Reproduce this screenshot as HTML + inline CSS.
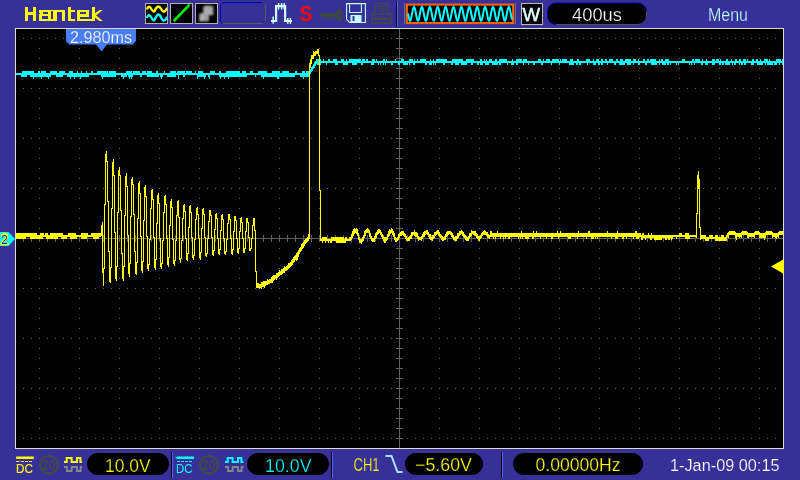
<!DOCTYPE html>
<html><head><meta charset="utf-8">
<style>
html,body{margin:0;padding:0;width:800px;height:480px;overflow:hidden;background:#363098;}
svg{display:block;will-change:transform;}
text{font-family:"Liberation Sans",sans-serif;}
</style></head><body>
<svg width="800" height="480" viewBox="0 0 800 480">
<defs>
<filter id="blur1" x="-20%" y="-20%" width="140%" height="140%"><feGaussianBlur stdDeviation="0.8"/></filter>
</defs>
<rect x="0" y="0" width="800" height="480" fill="#363098"/>
<!-- screen -->
<rect x="15" y="28" width="769" height="421" fill="#dcdcd0"/>
<rect x="16" y="29" width="767" height="419" fill="#000"/>
<path d="M23 38h1v1h-1zM31 38h1v1h-1zM39 38h1v1h-1zM47 38h1v1h-1zM55 38h1v1h-1zM63 38h1v1h-1zM71 38h1v1h-1zM79 38h1v1h-1zM87 38h1v1h-1zM95 38h1v1h-1zM103 38h1v1h-1zM111 38h1v1h-1zM119 38h1v1h-1zM127 38h1v1h-1zM135 38h1v1h-1zM143 38h1v1h-1zM151 38h1v1h-1zM159 38h1v1h-1zM167 38h1v1h-1zM175 38h1v1h-1zM183 38h1v1h-1zM191 38h1v1h-1zM199 38h1v1h-1zM207 38h1v1h-1zM215 38h1v1h-1zM223 38h1v1h-1zM231 38h1v1h-1zM239 38h1v1h-1zM247 38h1v1h-1zM255 38h1v1h-1zM263 38h1v1h-1zM271 38h1v1h-1zM279 38h1v1h-1zM287 38h1v1h-1zM295 38h1v1h-1zM303 38h1v1h-1zM311 38h1v1h-1zM319 38h1v1h-1zM327 38h1v1h-1zM335 38h1v1h-1zM343 38h1v1h-1zM351 38h1v1h-1zM359 38h1v1h-1zM367 38h1v1h-1zM375 38h1v1h-1zM383 38h1v1h-1zM391 38h1v1h-1zM399 38h1v1h-1zM407 38h1v1h-1zM415 38h1v1h-1zM423 38h1v1h-1zM431 38h1v1h-1zM439 38h1v1h-1zM447 38h1v1h-1zM455 38h1v1h-1zM463 38h1v1h-1zM471 38h1v1h-1zM479 38h1v1h-1zM487 38h1v1h-1zM495 38h1v1h-1zM503 38h1v1h-1zM511 38h1v1h-1zM519 38h1v1h-1zM527 38h1v1h-1zM535 38h1v1h-1zM543 38h1v1h-1zM551 38h1v1h-1zM559 38h1v1h-1zM567 38h1v1h-1zM575 38h1v1h-1zM583 38h1v1h-1zM591 38h1v1h-1zM599 38h1v1h-1zM607 38h1v1h-1zM615 38h1v1h-1zM623 38h1v1h-1zM631 38h1v1h-1zM639 38h1v1h-1zM647 38h1v1h-1zM655 38h1v1h-1zM663 38h1v1h-1zM671 38h1v1h-1zM679 38h1v1h-1zM687 38h1v1h-1zM695 38h1v1h-1zM703 38h1v1h-1zM711 38h1v1h-1zM719 38h1v1h-1zM727 38h1v1h-1zM735 38h1v1h-1zM743 38h1v1h-1zM751 38h1v1h-1zM759 38h1v1h-1zM767 38h1v1h-1zM775 38h1v1h-1zM23 88h1v1h-1zM31 88h1v1h-1zM39 88h1v1h-1zM47 88h1v1h-1zM55 88h1v1h-1zM63 88h1v1h-1zM71 88h1v1h-1zM79 88h1v1h-1zM87 88h1v1h-1zM95 88h1v1h-1zM103 88h1v1h-1zM111 88h1v1h-1zM119 88h1v1h-1zM127 88h1v1h-1zM135 88h1v1h-1zM143 88h1v1h-1zM151 88h1v1h-1zM159 88h1v1h-1zM167 88h1v1h-1zM175 88h1v1h-1zM183 88h1v1h-1zM191 88h1v1h-1zM199 88h1v1h-1zM207 88h1v1h-1zM215 88h1v1h-1zM223 88h1v1h-1zM231 88h1v1h-1zM239 88h1v1h-1zM247 88h1v1h-1zM255 88h1v1h-1zM263 88h1v1h-1zM271 88h1v1h-1zM279 88h1v1h-1zM287 88h1v1h-1zM295 88h1v1h-1zM303 88h1v1h-1zM311 88h1v1h-1zM319 88h1v1h-1zM327 88h1v1h-1zM335 88h1v1h-1zM343 88h1v1h-1zM351 88h1v1h-1zM359 88h1v1h-1zM367 88h1v1h-1zM375 88h1v1h-1zM383 88h1v1h-1zM391 88h1v1h-1zM399 88h1v1h-1zM407 88h1v1h-1zM415 88h1v1h-1zM423 88h1v1h-1zM431 88h1v1h-1zM439 88h1v1h-1zM447 88h1v1h-1zM455 88h1v1h-1zM463 88h1v1h-1zM471 88h1v1h-1zM479 88h1v1h-1zM487 88h1v1h-1zM495 88h1v1h-1zM503 88h1v1h-1zM511 88h1v1h-1zM519 88h1v1h-1zM527 88h1v1h-1zM535 88h1v1h-1zM543 88h1v1h-1zM551 88h1v1h-1zM559 88h1v1h-1zM567 88h1v1h-1zM575 88h1v1h-1zM583 88h1v1h-1zM591 88h1v1h-1zM599 88h1v1h-1zM607 88h1v1h-1zM615 88h1v1h-1zM623 88h1v1h-1zM631 88h1v1h-1zM639 88h1v1h-1zM647 88h1v1h-1zM655 88h1v1h-1zM663 88h1v1h-1zM671 88h1v1h-1zM679 88h1v1h-1zM687 88h1v1h-1zM695 88h1v1h-1zM703 88h1v1h-1zM711 88h1v1h-1zM719 88h1v1h-1zM727 88h1v1h-1zM735 88h1v1h-1zM743 88h1v1h-1zM751 88h1v1h-1zM759 88h1v1h-1zM767 88h1v1h-1zM775 88h1v1h-1zM23 138h1v1h-1zM31 138h1v1h-1zM39 138h1v1h-1zM47 138h1v1h-1zM55 138h1v1h-1zM63 138h1v1h-1zM71 138h1v1h-1zM79 138h1v1h-1zM87 138h1v1h-1zM95 138h1v1h-1zM103 138h1v1h-1zM111 138h1v1h-1zM119 138h1v1h-1zM127 138h1v1h-1zM135 138h1v1h-1zM143 138h1v1h-1zM151 138h1v1h-1zM159 138h1v1h-1zM167 138h1v1h-1zM175 138h1v1h-1zM183 138h1v1h-1zM191 138h1v1h-1zM199 138h1v1h-1zM207 138h1v1h-1zM215 138h1v1h-1zM223 138h1v1h-1zM231 138h1v1h-1zM239 138h1v1h-1zM247 138h1v1h-1zM255 138h1v1h-1zM263 138h1v1h-1zM271 138h1v1h-1zM279 138h1v1h-1zM287 138h1v1h-1zM295 138h1v1h-1zM303 138h1v1h-1zM311 138h1v1h-1zM319 138h1v1h-1zM327 138h1v1h-1zM335 138h1v1h-1zM343 138h1v1h-1zM351 138h1v1h-1zM359 138h1v1h-1zM367 138h1v1h-1zM375 138h1v1h-1zM383 138h1v1h-1zM391 138h1v1h-1zM399 138h1v1h-1zM407 138h1v1h-1zM415 138h1v1h-1zM423 138h1v1h-1zM431 138h1v1h-1zM439 138h1v1h-1zM447 138h1v1h-1zM455 138h1v1h-1zM463 138h1v1h-1zM471 138h1v1h-1zM479 138h1v1h-1zM487 138h1v1h-1zM495 138h1v1h-1zM503 138h1v1h-1zM511 138h1v1h-1zM519 138h1v1h-1zM527 138h1v1h-1zM535 138h1v1h-1zM543 138h1v1h-1zM551 138h1v1h-1zM559 138h1v1h-1zM567 138h1v1h-1zM575 138h1v1h-1zM583 138h1v1h-1zM591 138h1v1h-1zM599 138h1v1h-1zM607 138h1v1h-1zM615 138h1v1h-1zM623 138h1v1h-1zM631 138h1v1h-1zM639 138h1v1h-1zM647 138h1v1h-1zM655 138h1v1h-1zM663 138h1v1h-1zM671 138h1v1h-1zM679 138h1v1h-1zM687 138h1v1h-1zM695 138h1v1h-1zM703 138h1v1h-1zM711 138h1v1h-1zM719 138h1v1h-1zM727 138h1v1h-1zM735 138h1v1h-1zM743 138h1v1h-1zM751 138h1v1h-1zM759 138h1v1h-1zM767 138h1v1h-1zM775 138h1v1h-1zM23 188h1v1h-1zM31 188h1v1h-1zM39 188h1v1h-1zM47 188h1v1h-1zM55 188h1v1h-1zM63 188h1v1h-1zM71 188h1v1h-1zM79 188h1v1h-1zM87 188h1v1h-1zM95 188h1v1h-1zM103 188h1v1h-1zM111 188h1v1h-1zM119 188h1v1h-1zM127 188h1v1h-1zM135 188h1v1h-1zM143 188h1v1h-1zM151 188h1v1h-1zM159 188h1v1h-1zM167 188h1v1h-1zM175 188h1v1h-1zM183 188h1v1h-1zM191 188h1v1h-1zM199 188h1v1h-1zM207 188h1v1h-1zM215 188h1v1h-1zM223 188h1v1h-1zM231 188h1v1h-1zM239 188h1v1h-1zM247 188h1v1h-1zM255 188h1v1h-1zM263 188h1v1h-1zM271 188h1v1h-1zM279 188h1v1h-1zM287 188h1v1h-1zM295 188h1v1h-1zM303 188h1v1h-1zM311 188h1v1h-1zM319 188h1v1h-1zM327 188h1v1h-1zM335 188h1v1h-1zM343 188h1v1h-1zM351 188h1v1h-1zM359 188h1v1h-1zM367 188h1v1h-1zM375 188h1v1h-1zM383 188h1v1h-1zM391 188h1v1h-1zM399 188h1v1h-1zM407 188h1v1h-1zM415 188h1v1h-1zM423 188h1v1h-1zM431 188h1v1h-1zM439 188h1v1h-1zM447 188h1v1h-1zM455 188h1v1h-1zM463 188h1v1h-1zM471 188h1v1h-1zM479 188h1v1h-1zM487 188h1v1h-1zM495 188h1v1h-1zM503 188h1v1h-1zM511 188h1v1h-1zM519 188h1v1h-1zM527 188h1v1h-1zM535 188h1v1h-1zM543 188h1v1h-1zM551 188h1v1h-1zM559 188h1v1h-1zM567 188h1v1h-1zM575 188h1v1h-1zM583 188h1v1h-1zM591 188h1v1h-1zM599 188h1v1h-1zM607 188h1v1h-1zM615 188h1v1h-1zM623 188h1v1h-1zM631 188h1v1h-1zM639 188h1v1h-1zM647 188h1v1h-1zM655 188h1v1h-1zM663 188h1v1h-1zM671 188h1v1h-1zM679 188h1v1h-1zM687 188h1v1h-1zM695 188h1v1h-1zM703 188h1v1h-1zM711 188h1v1h-1zM719 188h1v1h-1zM727 188h1v1h-1zM735 188h1v1h-1zM743 188h1v1h-1zM751 188h1v1h-1zM759 188h1v1h-1zM767 188h1v1h-1zM775 188h1v1h-1zM23 288h1v1h-1zM31 288h1v1h-1zM39 288h1v1h-1zM47 288h1v1h-1zM55 288h1v1h-1zM63 288h1v1h-1zM71 288h1v1h-1zM79 288h1v1h-1zM87 288h1v1h-1zM95 288h1v1h-1zM103 288h1v1h-1zM111 288h1v1h-1zM119 288h1v1h-1zM127 288h1v1h-1zM135 288h1v1h-1zM143 288h1v1h-1zM151 288h1v1h-1zM159 288h1v1h-1zM167 288h1v1h-1zM175 288h1v1h-1zM183 288h1v1h-1zM191 288h1v1h-1zM199 288h1v1h-1zM207 288h1v1h-1zM215 288h1v1h-1zM223 288h1v1h-1zM231 288h1v1h-1zM239 288h1v1h-1zM247 288h1v1h-1zM255 288h1v1h-1zM263 288h1v1h-1zM271 288h1v1h-1zM279 288h1v1h-1zM287 288h1v1h-1zM295 288h1v1h-1zM303 288h1v1h-1zM311 288h1v1h-1zM319 288h1v1h-1zM327 288h1v1h-1zM335 288h1v1h-1zM343 288h1v1h-1zM351 288h1v1h-1zM359 288h1v1h-1zM367 288h1v1h-1zM375 288h1v1h-1zM383 288h1v1h-1zM391 288h1v1h-1zM399 288h1v1h-1zM407 288h1v1h-1zM415 288h1v1h-1zM423 288h1v1h-1zM431 288h1v1h-1zM439 288h1v1h-1zM447 288h1v1h-1zM455 288h1v1h-1zM463 288h1v1h-1zM471 288h1v1h-1zM479 288h1v1h-1zM487 288h1v1h-1zM495 288h1v1h-1zM503 288h1v1h-1zM511 288h1v1h-1zM519 288h1v1h-1zM527 288h1v1h-1zM535 288h1v1h-1zM543 288h1v1h-1zM551 288h1v1h-1zM559 288h1v1h-1zM567 288h1v1h-1zM575 288h1v1h-1zM583 288h1v1h-1zM591 288h1v1h-1zM599 288h1v1h-1zM607 288h1v1h-1zM615 288h1v1h-1zM623 288h1v1h-1zM631 288h1v1h-1zM639 288h1v1h-1zM647 288h1v1h-1zM655 288h1v1h-1zM663 288h1v1h-1zM671 288h1v1h-1zM679 288h1v1h-1zM687 288h1v1h-1zM695 288h1v1h-1zM703 288h1v1h-1zM711 288h1v1h-1zM719 288h1v1h-1zM727 288h1v1h-1zM735 288h1v1h-1zM743 288h1v1h-1zM751 288h1v1h-1zM759 288h1v1h-1zM767 288h1v1h-1zM775 288h1v1h-1zM23 338h1v1h-1zM31 338h1v1h-1zM39 338h1v1h-1zM47 338h1v1h-1zM55 338h1v1h-1zM63 338h1v1h-1zM71 338h1v1h-1zM79 338h1v1h-1zM87 338h1v1h-1zM95 338h1v1h-1zM103 338h1v1h-1zM111 338h1v1h-1zM119 338h1v1h-1zM127 338h1v1h-1zM135 338h1v1h-1zM143 338h1v1h-1zM151 338h1v1h-1zM159 338h1v1h-1zM167 338h1v1h-1zM175 338h1v1h-1zM183 338h1v1h-1zM191 338h1v1h-1zM199 338h1v1h-1zM207 338h1v1h-1zM215 338h1v1h-1zM223 338h1v1h-1zM231 338h1v1h-1zM239 338h1v1h-1zM247 338h1v1h-1zM255 338h1v1h-1zM263 338h1v1h-1zM271 338h1v1h-1zM279 338h1v1h-1zM287 338h1v1h-1zM295 338h1v1h-1zM303 338h1v1h-1zM311 338h1v1h-1zM319 338h1v1h-1zM327 338h1v1h-1zM335 338h1v1h-1zM343 338h1v1h-1zM351 338h1v1h-1zM359 338h1v1h-1zM367 338h1v1h-1zM375 338h1v1h-1zM383 338h1v1h-1zM391 338h1v1h-1zM399 338h1v1h-1zM407 338h1v1h-1zM415 338h1v1h-1zM423 338h1v1h-1zM431 338h1v1h-1zM439 338h1v1h-1zM447 338h1v1h-1zM455 338h1v1h-1zM463 338h1v1h-1zM471 338h1v1h-1zM479 338h1v1h-1zM487 338h1v1h-1zM495 338h1v1h-1zM503 338h1v1h-1zM511 338h1v1h-1zM519 338h1v1h-1zM527 338h1v1h-1zM535 338h1v1h-1zM543 338h1v1h-1zM551 338h1v1h-1zM559 338h1v1h-1zM567 338h1v1h-1zM575 338h1v1h-1zM583 338h1v1h-1zM591 338h1v1h-1zM599 338h1v1h-1zM607 338h1v1h-1zM615 338h1v1h-1zM623 338h1v1h-1zM631 338h1v1h-1zM639 338h1v1h-1zM647 338h1v1h-1zM655 338h1v1h-1zM663 338h1v1h-1zM671 338h1v1h-1zM679 338h1v1h-1zM687 338h1v1h-1zM695 338h1v1h-1zM703 338h1v1h-1zM711 338h1v1h-1zM719 338h1v1h-1zM727 338h1v1h-1zM735 338h1v1h-1zM743 338h1v1h-1zM751 338h1v1h-1zM759 338h1v1h-1zM767 338h1v1h-1zM775 338h1v1h-1zM23 388h1v1h-1zM31 388h1v1h-1zM39 388h1v1h-1zM47 388h1v1h-1zM55 388h1v1h-1zM63 388h1v1h-1zM71 388h1v1h-1zM79 388h1v1h-1zM87 388h1v1h-1zM95 388h1v1h-1zM103 388h1v1h-1zM111 388h1v1h-1zM119 388h1v1h-1zM127 388h1v1h-1zM135 388h1v1h-1zM143 388h1v1h-1zM151 388h1v1h-1zM159 388h1v1h-1zM167 388h1v1h-1zM175 388h1v1h-1zM183 388h1v1h-1zM191 388h1v1h-1zM199 388h1v1h-1zM207 388h1v1h-1zM215 388h1v1h-1zM223 388h1v1h-1zM231 388h1v1h-1zM239 388h1v1h-1zM247 388h1v1h-1zM255 388h1v1h-1zM263 388h1v1h-1zM271 388h1v1h-1zM279 388h1v1h-1zM287 388h1v1h-1zM295 388h1v1h-1zM303 388h1v1h-1zM311 388h1v1h-1zM319 388h1v1h-1zM327 388h1v1h-1zM335 388h1v1h-1zM343 388h1v1h-1zM351 388h1v1h-1zM359 388h1v1h-1zM367 388h1v1h-1zM375 388h1v1h-1zM383 388h1v1h-1zM391 388h1v1h-1zM399 388h1v1h-1zM407 388h1v1h-1zM415 388h1v1h-1zM423 388h1v1h-1zM431 388h1v1h-1zM439 388h1v1h-1zM447 388h1v1h-1zM455 388h1v1h-1zM463 388h1v1h-1zM471 388h1v1h-1zM479 388h1v1h-1zM487 388h1v1h-1zM495 388h1v1h-1zM503 388h1v1h-1zM511 388h1v1h-1zM519 388h1v1h-1zM527 388h1v1h-1zM535 388h1v1h-1zM543 388h1v1h-1zM551 388h1v1h-1zM559 388h1v1h-1zM567 388h1v1h-1zM575 388h1v1h-1zM583 388h1v1h-1zM591 388h1v1h-1zM599 388h1v1h-1zM607 388h1v1h-1zM615 388h1v1h-1zM623 388h1v1h-1zM631 388h1v1h-1zM639 388h1v1h-1zM647 388h1v1h-1zM655 388h1v1h-1zM663 388h1v1h-1zM671 388h1v1h-1zM679 388h1v1h-1zM687 388h1v1h-1zM695 388h1v1h-1zM703 388h1v1h-1zM711 388h1v1h-1zM719 388h1v1h-1zM727 388h1v1h-1zM735 388h1v1h-1zM743 388h1v1h-1zM751 388h1v1h-1zM759 388h1v1h-1zM767 388h1v1h-1zM775 388h1v1h-1zM23 438h1v1h-1zM31 438h1v1h-1zM39 438h1v1h-1zM47 438h1v1h-1zM55 438h1v1h-1zM63 438h1v1h-1zM71 438h1v1h-1zM79 438h1v1h-1zM87 438h1v1h-1zM95 438h1v1h-1zM103 438h1v1h-1zM111 438h1v1h-1zM119 438h1v1h-1zM127 438h1v1h-1zM135 438h1v1h-1zM143 438h1v1h-1zM151 438h1v1h-1zM159 438h1v1h-1zM167 438h1v1h-1zM175 438h1v1h-1zM183 438h1v1h-1zM191 438h1v1h-1zM199 438h1v1h-1zM207 438h1v1h-1zM215 438h1v1h-1zM223 438h1v1h-1zM231 438h1v1h-1zM239 438h1v1h-1zM247 438h1v1h-1zM255 438h1v1h-1zM263 438h1v1h-1zM271 438h1v1h-1zM279 438h1v1h-1zM287 438h1v1h-1zM295 438h1v1h-1zM303 438h1v1h-1zM311 438h1v1h-1zM319 438h1v1h-1zM327 438h1v1h-1zM335 438h1v1h-1zM343 438h1v1h-1zM351 438h1v1h-1zM359 438h1v1h-1zM367 438h1v1h-1zM375 438h1v1h-1zM383 438h1v1h-1zM391 438h1v1h-1zM399 438h1v1h-1zM407 438h1v1h-1zM415 438h1v1h-1zM423 438h1v1h-1zM431 438h1v1h-1zM439 438h1v1h-1zM447 438h1v1h-1zM455 438h1v1h-1zM463 438h1v1h-1zM471 438h1v1h-1zM479 438h1v1h-1zM487 438h1v1h-1zM495 438h1v1h-1zM503 438h1v1h-1zM511 438h1v1h-1zM519 438h1v1h-1zM527 438h1v1h-1zM535 438h1v1h-1zM543 438h1v1h-1zM551 438h1v1h-1zM559 438h1v1h-1zM567 438h1v1h-1zM575 438h1v1h-1zM583 438h1v1h-1zM591 438h1v1h-1zM599 438h1v1h-1zM607 438h1v1h-1zM615 438h1v1h-1zM623 438h1v1h-1zM631 438h1v1h-1zM639 438h1v1h-1zM647 438h1v1h-1zM655 438h1v1h-1zM663 438h1v1h-1zM671 438h1v1h-1zM679 438h1v1h-1zM687 438h1v1h-1zM695 438h1v1h-1zM703 438h1v1h-1zM711 438h1v1h-1zM719 438h1v1h-1zM727 438h1v1h-1zM735 438h1v1h-1zM743 438h1v1h-1zM751 438h1v1h-1zM759 438h1v1h-1zM767 438h1v1h-1zM775 438h1v1h-1zM39 38h1v1h-1zM39 48h1v1h-1zM39 58h1v1h-1zM39 68h1v1h-1zM39 78h1v1h-1zM39 88h1v1h-1zM39 98h1v1h-1zM39 108h1v1h-1zM39 118h1v1h-1zM39 128h1v1h-1zM39 138h1v1h-1zM39 148h1v1h-1zM39 158h1v1h-1zM39 168h1v1h-1zM39 178h1v1h-1zM39 188h1v1h-1zM39 198h1v1h-1zM39 208h1v1h-1zM39 218h1v1h-1zM39 228h1v1h-1zM39 248h1v1h-1zM39 258h1v1h-1zM39 268h1v1h-1zM39 278h1v1h-1zM39 288h1v1h-1zM39 298h1v1h-1zM39 308h1v1h-1zM39 318h1v1h-1zM39 328h1v1h-1zM39 338h1v1h-1zM39 348h1v1h-1zM39 358h1v1h-1zM39 368h1v1h-1zM39 378h1v1h-1zM39 388h1v1h-1zM39 398h1v1h-1zM39 408h1v1h-1zM39 418h1v1h-1zM39 428h1v1h-1zM39 438h1v1h-1zM79 38h1v1h-1zM79 48h1v1h-1zM79 58h1v1h-1zM79 68h1v1h-1zM79 78h1v1h-1zM79 88h1v1h-1zM79 98h1v1h-1zM79 108h1v1h-1zM79 118h1v1h-1zM79 128h1v1h-1zM79 138h1v1h-1zM79 148h1v1h-1zM79 158h1v1h-1zM79 168h1v1h-1zM79 178h1v1h-1zM79 188h1v1h-1zM79 198h1v1h-1zM79 208h1v1h-1zM79 218h1v1h-1zM79 228h1v1h-1zM79 248h1v1h-1zM79 258h1v1h-1zM79 268h1v1h-1zM79 278h1v1h-1zM79 288h1v1h-1zM79 298h1v1h-1zM79 308h1v1h-1zM79 318h1v1h-1zM79 328h1v1h-1zM79 338h1v1h-1zM79 348h1v1h-1zM79 358h1v1h-1zM79 368h1v1h-1zM79 378h1v1h-1zM79 388h1v1h-1zM79 398h1v1h-1zM79 408h1v1h-1zM79 418h1v1h-1zM79 428h1v1h-1zM79 438h1v1h-1zM119 38h1v1h-1zM119 48h1v1h-1zM119 58h1v1h-1zM119 68h1v1h-1zM119 78h1v1h-1zM119 88h1v1h-1zM119 98h1v1h-1zM119 108h1v1h-1zM119 118h1v1h-1zM119 128h1v1h-1zM119 138h1v1h-1zM119 148h1v1h-1zM119 158h1v1h-1zM119 168h1v1h-1zM119 178h1v1h-1zM119 188h1v1h-1zM119 198h1v1h-1zM119 208h1v1h-1zM119 218h1v1h-1zM119 228h1v1h-1zM119 248h1v1h-1zM119 258h1v1h-1zM119 268h1v1h-1zM119 278h1v1h-1zM119 288h1v1h-1zM119 298h1v1h-1zM119 308h1v1h-1zM119 318h1v1h-1zM119 328h1v1h-1zM119 338h1v1h-1zM119 348h1v1h-1zM119 358h1v1h-1zM119 368h1v1h-1zM119 378h1v1h-1zM119 388h1v1h-1zM119 398h1v1h-1zM119 408h1v1h-1zM119 418h1v1h-1zM119 428h1v1h-1zM119 438h1v1h-1zM159 38h1v1h-1zM159 48h1v1h-1zM159 58h1v1h-1zM159 68h1v1h-1zM159 78h1v1h-1zM159 88h1v1h-1zM159 98h1v1h-1zM159 108h1v1h-1zM159 118h1v1h-1zM159 128h1v1h-1zM159 138h1v1h-1zM159 148h1v1h-1zM159 158h1v1h-1zM159 168h1v1h-1zM159 178h1v1h-1zM159 188h1v1h-1zM159 198h1v1h-1zM159 208h1v1h-1zM159 218h1v1h-1zM159 228h1v1h-1zM159 248h1v1h-1zM159 258h1v1h-1zM159 268h1v1h-1zM159 278h1v1h-1zM159 288h1v1h-1zM159 298h1v1h-1zM159 308h1v1h-1zM159 318h1v1h-1zM159 328h1v1h-1zM159 338h1v1h-1zM159 348h1v1h-1zM159 358h1v1h-1zM159 368h1v1h-1zM159 378h1v1h-1zM159 388h1v1h-1zM159 398h1v1h-1zM159 408h1v1h-1zM159 418h1v1h-1zM159 428h1v1h-1zM159 438h1v1h-1zM199 38h1v1h-1zM199 48h1v1h-1zM199 58h1v1h-1zM199 68h1v1h-1zM199 78h1v1h-1zM199 88h1v1h-1zM199 98h1v1h-1zM199 108h1v1h-1zM199 118h1v1h-1zM199 128h1v1h-1zM199 138h1v1h-1zM199 148h1v1h-1zM199 158h1v1h-1zM199 168h1v1h-1zM199 178h1v1h-1zM199 188h1v1h-1zM199 198h1v1h-1zM199 208h1v1h-1zM199 218h1v1h-1zM199 228h1v1h-1zM199 248h1v1h-1zM199 258h1v1h-1zM199 268h1v1h-1zM199 278h1v1h-1zM199 288h1v1h-1zM199 298h1v1h-1zM199 308h1v1h-1zM199 318h1v1h-1zM199 328h1v1h-1zM199 338h1v1h-1zM199 348h1v1h-1zM199 358h1v1h-1zM199 368h1v1h-1zM199 378h1v1h-1zM199 388h1v1h-1zM199 398h1v1h-1zM199 408h1v1h-1zM199 418h1v1h-1zM199 428h1v1h-1zM199 438h1v1h-1zM239 38h1v1h-1zM239 48h1v1h-1zM239 58h1v1h-1zM239 68h1v1h-1zM239 78h1v1h-1zM239 88h1v1h-1zM239 98h1v1h-1zM239 108h1v1h-1zM239 118h1v1h-1zM239 128h1v1h-1zM239 138h1v1h-1zM239 148h1v1h-1zM239 158h1v1h-1zM239 168h1v1h-1zM239 178h1v1h-1zM239 188h1v1h-1zM239 198h1v1h-1zM239 208h1v1h-1zM239 218h1v1h-1zM239 228h1v1h-1zM239 248h1v1h-1zM239 258h1v1h-1zM239 268h1v1h-1zM239 278h1v1h-1zM239 288h1v1h-1zM239 298h1v1h-1zM239 308h1v1h-1zM239 318h1v1h-1zM239 328h1v1h-1zM239 338h1v1h-1zM239 348h1v1h-1zM239 358h1v1h-1zM239 368h1v1h-1zM239 378h1v1h-1zM239 388h1v1h-1zM239 398h1v1h-1zM239 408h1v1h-1zM239 418h1v1h-1zM239 428h1v1h-1zM239 438h1v1h-1zM279 38h1v1h-1zM279 48h1v1h-1zM279 58h1v1h-1zM279 68h1v1h-1zM279 78h1v1h-1zM279 88h1v1h-1zM279 98h1v1h-1zM279 108h1v1h-1zM279 118h1v1h-1zM279 128h1v1h-1zM279 138h1v1h-1zM279 148h1v1h-1zM279 158h1v1h-1zM279 168h1v1h-1zM279 178h1v1h-1zM279 188h1v1h-1zM279 198h1v1h-1zM279 208h1v1h-1zM279 218h1v1h-1zM279 228h1v1h-1zM279 248h1v1h-1zM279 258h1v1h-1zM279 268h1v1h-1zM279 278h1v1h-1zM279 288h1v1h-1zM279 298h1v1h-1zM279 308h1v1h-1zM279 318h1v1h-1zM279 328h1v1h-1zM279 338h1v1h-1zM279 348h1v1h-1zM279 358h1v1h-1zM279 368h1v1h-1zM279 378h1v1h-1zM279 388h1v1h-1zM279 398h1v1h-1zM279 408h1v1h-1zM279 418h1v1h-1zM279 428h1v1h-1zM279 438h1v1h-1zM319 38h1v1h-1zM319 48h1v1h-1zM319 58h1v1h-1zM319 68h1v1h-1zM319 78h1v1h-1zM319 88h1v1h-1zM319 98h1v1h-1zM319 108h1v1h-1zM319 118h1v1h-1zM319 128h1v1h-1zM319 138h1v1h-1zM319 148h1v1h-1zM319 158h1v1h-1zM319 168h1v1h-1zM319 178h1v1h-1zM319 188h1v1h-1zM319 198h1v1h-1zM319 208h1v1h-1zM319 218h1v1h-1zM319 228h1v1h-1zM319 248h1v1h-1zM319 258h1v1h-1zM319 268h1v1h-1zM319 278h1v1h-1zM319 288h1v1h-1zM319 298h1v1h-1zM319 308h1v1h-1zM319 318h1v1h-1zM319 328h1v1h-1zM319 338h1v1h-1zM319 348h1v1h-1zM319 358h1v1h-1zM319 368h1v1h-1zM319 378h1v1h-1zM319 388h1v1h-1zM319 398h1v1h-1zM319 408h1v1h-1zM319 418h1v1h-1zM319 428h1v1h-1zM319 438h1v1h-1zM359 38h1v1h-1zM359 48h1v1h-1zM359 58h1v1h-1zM359 68h1v1h-1zM359 78h1v1h-1zM359 88h1v1h-1zM359 98h1v1h-1zM359 108h1v1h-1zM359 118h1v1h-1zM359 128h1v1h-1zM359 138h1v1h-1zM359 148h1v1h-1zM359 158h1v1h-1zM359 168h1v1h-1zM359 178h1v1h-1zM359 188h1v1h-1zM359 198h1v1h-1zM359 208h1v1h-1zM359 218h1v1h-1zM359 228h1v1h-1zM359 248h1v1h-1zM359 258h1v1h-1zM359 268h1v1h-1zM359 278h1v1h-1zM359 288h1v1h-1zM359 298h1v1h-1zM359 308h1v1h-1zM359 318h1v1h-1zM359 328h1v1h-1zM359 338h1v1h-1zM359 348h1v1h-1zM359 358h1v1h-1zM359 368h1v1h-1zM359 378h1v1h-1zM359 388h1v1h-1zM359 398h1v1h-1zM359 408h1v1h-1zM359 418h1v1h-1zM359 428h1v1h-1zM359 438h1v1h-1zM439 38h1v1h-1zM439 48h1v1h-1zM439 58h1v1h-1zM439 68h1v1h-1zM439 78h1v1h-1zM439 88h1v1h-1zM439 98h1v1h-1zM439 108h1v1h-1zM439 118h1v1h-1zM439 128h1v1h-1zM439 138h1v1h-1zM439 148h1v1h-1zM439 158h1v1h-1zM439 168h1v1h-1zM439 178h1v1h-1zM439 188h1v1h-1zM439 198h1v1h-1zM439 208h1v1h-1zM439 218h1v1h-1zM439 228h1v1h-1zM439 248h1v1h-1zM439 258h1v1h-1zM439 268h1v1h-1zM439 278h1v1h-1zM439 288h1v1h-1zM439 298h1v1h-1zM439 308h1v1h-1zM439 318h1v1h-1zM439 328h1v1h-1zM439 338h1v1h-1zM439 348h1v1h-1zM439 358h1v1h-1zM439 368h1v1h-1zM439 378h1v1h-1zM439 388h1v1h-1zM439 398h1v1h-1zM439 408h1v1h-1zM439 418h1v1h-1zM439 428h1v1h-1zM439 438h1v1h-1zM479 38h1v1h-1zM479 48h1v1h-1zM479 58h1v1h-1zM479 68h1v1h-1zM479 78h1v1h-1zM479 88h1v1h-1zM479 98h1v1h-1zM479 108h1v1h-1zM479 118h1v1h-1zM479 128h1v1h-1zM479 138h1v1h-1zM479 148h1v1h-1zM479 158h1v1h-1zM479 168h1v1h-1zM479 178h1v1h-1zM479 188h1v1h-1zM479 198h1v1h-1zM479 208h1v1h-1zM479 218h1v1h-1zM479 228h1v1h-1zM479 248h1v1h-1zM479 258h1v1h-1zM479 268h1v1h-1zM479 278h1v1h-1zM479 288h1v1h-1zM479 298h1v1h-1zM479 308h1v1h-1zM479 318h1v1h-1zM479 328h1v1h-1zM479 338h1v1h-1zM479 348h1v1h-1zM479 358h1v1h-1zM479 368h1v1h-1zM479 378h1v1h-1zM479 388h1v1h-1zM479 398h1v1h-1zM479 408h1v1h-1zM479 418h1v1h-1zM479 428h1v1h-1zM479 438h1v1h-1zM519 38h1v1h-1zM519 48h1v1h-1zM519 58h1v1h-1zM519 68h1v1h-1zM519 78h1v1h-1zM519 88h1v1h-1zM519 98h1v1h-1zM519 108h1v1h-1zM519 118h1v1h-1zM519 128h1v1h-1zM519 138h1v1h-1zM519 148h1v1h-1zM519 158h1v1h-1zM519 168h1v1h-1zM519 178h1v1h-1zM519 188h1v1h-1zM519 198h1v1h-1zM519 208h1v1h-1zM519 218h1v1h-1zM519 228h1v1h-1zM519 248h1v1h-1zM519 258h1v1h-1zM519 268h1v1h-1zM519 278h1v1h-1zM519 288h1v1h-1zM519 298h1v1h-1zM519 308h1v1h-1zM519 318h1v1h-1zM519 328h1v1h-1zM519 338h1v1h-1zM519 348h1v1h-1zM519 358h1v1h-1zM519 368h1v1h-1zM519 378h1v1h-1zM519 388h1v1h-1zM519 398h1v1h-1zM519 408h1v1h-1zM519 418h1v1h-1zM519 428h1v1h-1zM519 438h1v1h-1zM559 38h1v1h-1zM559 48h1v1h-1zM559 58h1v1h-1zM559 68h1v1h-1zM559 78h1v1h-1zM559 88h1v1h-1zM559 98h1v1h-1zM559 108h1v1h-1zM559 118h1v1h-1zM559 128h1v1h-1zM559 138h1v1h-1zM559 148h1v1h-1zM559 158h1v1h-1zM559 168h1v1h-1zM559 178h1v1h-1zM559 188h1v1h-1zM559 198h1v1h-1zM559 208h1v1h-1zM559 218h1v1h-1zM559 228h1v1h-1zM559 248h1v1h-1zM559 258h1v1h-1zM559 268h1v1h-1zM559 278h1v1h-1zM559 288h1v1h-1zM559 298h1v1h-1zM559 308h1v1h-1zM559 318h1v1h-1zM559 328h1v1h-1zM559 338h1v1h-1zM559 348h1v1h-1zM559 358h1v1h-1zM559 368h1v1h-1zM559 378h1v1h-1zM559 388h1v1h-1zM559 398h1v1h-1zM559 408h1v1h-1zM559 418h1v1h-1zM559 428h1v1h-1zM559 438h1v1h-1zM599 38h1v1h-1zM599 48h1v1h-1zM599 58h1v1h-1zM599 68h1v1h-1zM599 78h1v1h-1zM599 88h1v1h-1zM599 98h1v1h-1zM599 108h1v1h-1zM599 118h1v1h-1zM599 128h1v1h-1zM599 138h1v1h-1zM599 148h1v1h-1zM599 158h1v1h-1zM599 168h1v1h-1zM599 178h1v1h-1zM599 188h1v1h-1zM599 198h1v1h-1zM599 208h1v1h-1zM599 218h1v1h-1zM599 228h1v1h-1zM599 248h1v1h-1zM599 258h1v1h-1zM599 268h1v1h-1zM599 278h1v1h-1zM599 288h1v1h-1zM599 298h1v1h-1zM599 308h1v1h-1zM599 318h1v1h-1zM599 328h1v1h-1zM599 338h1v1h-1zM599 348h1v1h-1zM599 358h1v1h-1zM599 368h1v1h-1zM599 378h1v1h-1zM599 388h1v1h-1zM599 398h1v1h-1zM599 408h1v1h-1zM599 418h1v1h-1zM599 428h1v1h-1zM599 438h1v1h-1zM639 38h1v1h-1zM639 48h1v1h-1zM639 58h1v1h-1zM639 68h1v1h-1zM639 78h1v1h-1zM639 88h1v1h-1zM639 98h1v1h-1zM639 108h1v1h-1zM639 118h1v1h-1zM639 128h1v1h-1zM639 138h1v1h-1zM639 148h1v1h-1zM639 158h1v1h-1zM639 168h1v1h-1zM639 178h1v1h-1zM639 188h1v1h-1zM639 198h1v1h-1zM639 208h1v1h-1zM639 218h1v1h-1zM639 228h1v1h-1zM639 248h1v1h-1zM639 258h1v1h-1zM639 268h1v1h-1zM639 278h1v1h-1zM639 288h1v1h-1zM639 298h1v1h-1zM639 308h1v1h-1zM639 318h1v1h-1zM639 328h1v1h-1zM639 338h1v1h-1zM639 348h1v1h-1zM639 358h1v1h-1zM639 368h1v1h-1zM639 378h1v1h-1zM639 388h1v1h-1zM639 398h1v1h-1zM639 408h1v1h-1zM639 418h1v1h-1zM639 428h1v1h-1zM639 438h1v1h-1zM679 38h1v1h-1zM679 48h1v1h-1zM679 58h1v1h-1zM679 68h1v1h-1zM679 78h1v1h-1zM679 88h1v1h-1zM679 98h1v1h-1zM679 108h1v1h-1zM679 118h1v1h-1zM679 128h1v1h-1zM679 138h1v1h-1zM679 148h1v1h-1zM679 158h1v1h-1zM679 168h1v1h-1zM679 178h1v1h-1zM679 188h1v1h-1zM679 198h1v1h-1zM679 208h1v1h-1zM679 218h1v1h-1zM679 228h1v1h-1zM679 248h1v1h-1zM679 258h1v1h-1zM679 268h1v1h-1zM679 278h1v1h-1zM679 288h1v1h-1zM679 298h1v1h-1zM679 308h1v1h-1zM679 318h1v1h-1zM679 328h1v1h-1zM679 338h1v1h-1zM679 348h1v1h-1zM679 358h1v1h-1zM679 368h1v1h-1zM679 378h1v1h-1zM679 388h1v1h-1zM679 398h1v1h-1zM679 408h1v1h-1zM679 418h1v1h-1zM679 428h1v1h-1zM679 438h1v1h-1zM719 38h1v1h-1zM719 48h1v1h-1zM719 58h1v1h-1zM719 68h1v1h-1zM719 78h1v1h-1zM719 88h1v1h-1zM719 98h1v1h-1zM719 108h1v1h-1zM719 118h1v1h-1zM719 128h1v1h-1zM719 138h1v1h-1zM719 148h1v1h-1zM719 158h1v1h-1zM719 168h1v1h-1zM719 178h1v1h-1zM719 188h1v1h-1zM719 198h1v1h-1zM719 208h1v1h-1zM719 218h1v1h-1zM719 228h1v1h-1zM719 248h1v1h-1zM719 258h1v1h-1zM719 268h1v1h-1zM719 278h1v1h-1zM719 288h1v1h-1zM719 298h1v1h-1zM719 308h1v1h-1zM719 318h1v1h-1zM719 328h1v1h-1zM719 338h1v1h-1zM719 348h1v1h-1zM719 358h1v1h-1zM719 368h1v1h-1zM719 378h1v1h-1zM719 388h1v1h-1zM719 398h1v1h-1zM719 408h1v1h-1zM719 418h1v1h-1zM719 428h1v1h-1zM719 438h1v1h-1zM759 38h1v1h-1zM759 48h1v1h-1zM759 58h1v1h-1zM759 68h1v1h-1zM759 78h1v1h-1zM759 88h1v1h-1zM759 98h1v1h-1zM759 108h1v1h-1zM759 118h1v1h-1zM759 128h1v1h-1zM759 138h1v1h-1zM759 148h1v1h-1zM759 158h1v1h-1zM759 168h1v1h-1zM759 178h1v1h-1zM759 188h1v1h-1zM759 198h1v1h-1zM759 208h1v1h-1zM759 218h1v1h-1zM759 228h1v1h-1zM759 248h1v1h-1zM759 258h1v1h-1zM759 268h1v1h-1zM759 278h1v1h-1zM759 288h1v1h-1zM759 298h1v1h-1zM759 308h1v1h-1zM759 318h1v1h-1zM759 328h1v1h-1zM759 338h1v1h-1zM759 348h1v1h-1zM759 358h1v1h-1zM759 368h1v1h-1zM759 378h1v1h-1zM759 388h1v1h-1zM759 398h1v1h-1zM759 408h1v1h-1zM759 418h1v1h-1zM759 428h1v1h-1zM759 438h1v1h-1zM399 29h1v419h-1zM16 238h767v1h-767zM396 38h7v1h-7zM396 48h7v1h-7zM396 58h7v1h-7zM396 68h7v1h-7zM396 78h7v1h-7zM396 88h7v1h-7zM396 98h7v1h-7zM396 108h7v1h-7zM396 118h7v1h-7zM396 128h7v1h-7zM396 138h7v1h-7zM396 148h7v1h-7zM396 158h7v1h-7zM396 168h7v1h-7zM396 178h7v1h-7zM396 188h7v1h-7zM396 198h7v1h-7zM396 208h7v1h-7zM396 218h7v1h-7zM396 228h7v1h-7zM396 238h7v1h-7zM396 248h7v1h-7zM396 258h7v1h-7zM396 268h7v1h-7zM396 278h7v1h-7zM396 288h7v1h-7zM396 298h7v1h-7zM396 308h7v1h-7zM396 318h7v1h-7zM396 328h7v1h-7zM396 338h7v1h-7zM396 348h7v1h-7zM396 358h7v1h-7zM396 368h7v1h-7zM396 378h7v1h-7zM396 388h7v1h-7zM396 398h7v1h-7zM396 408h7v1h-7zM396 418h7v1h-7zM396 428h7v1h-7zM396 438h7v1h-7zM23 235h1v7h-1zM31 235h1v7h-1zM39 235h1v7h-1zM47 235h1v7h-1zM55 235h1v7h-1zM63 235h1v7h-1zM71 235h1v7h-1zM79 235h1v7h-1zM87 235h1v7h-1zM95 235h1v7h-1zM103 235h1v7h-1zM111 235h1v7h-1zM119 235h1v7h-1zM127 235h1v7h-1zM135 235h1v7h-1zM143 235h1v7h-1zM151 235h1v7h-1zM159 235h1v7h-1zM167 235h1v7h-1zM175 235h1v7h-1zM183 235h1v7h-1zM191 235h1v7h-1zM199 235h1v7h-1zM207 235h1v7h-1zM215 235h1v7h-1zM223 235h1v7h-1zM231 235h1v7h-1zM239 235h1v7h-1zM247 235h1v7h-1zM255 235h1v7h-1zM263 235h1v7h-1zM271 235h1v7h-1zM279 235h1v7h-1zM287 235h1v7h-1zM295 235h1v7h-1zM303 235h1v7h-1zM311 235h1v7h-1zM319 235h1v7h-1zM327 235h1v7h-1zM335 235h1v7h-1zM343 235h1v7h-1zM351 235h1v7h-1zM359 235h1v7h-1zM367 235h1v7h-1zM375 235h1v7h-1zM383 235h1v7h-1zM391 235h1v7h-1zM399 235h1v7h-1zM407 235h1v7h-1zM415 235h1v7h-1zM423 235h1v7h-1zM431 235h1v7h-1zM439 235h1v7h-1zM447 235h1v7h-1zM455 235h1v7h-1zM463 235h1v7h-1zM471 235h1v7h-1zM479 235h1v7h-1zM487 235h1v7h-1zM495 235h1v7h-1zM503 235h1v7h-1zM511 235h1v7h-1zM519 235h1v7h-1zM527 235h1v7h-1zM535 235h1v7h-1zM543 235h1v7h-1zM551 235h1v7h-1zM559 235h1v7h-1zM567 235h1v7h-1zM575 235h1v7h-1zM583 235h1v7h-1zM591 235h1v7h-1zM599 235h1v7h-1zM607 235h1v7h-1zM615 235h1v7h-1zM623 235h1v7h-1zM631 235h1v7h-1zM639 235h1v7h-1zM647 235h1v7h-1zM655 235h1v7h-1zM663 235h1v7h-1zM671 235h1v7h-1zM679 235h1v7h-1zM687 235h1v7h-1zM695 235h1v7h-1zM703 235h1v7h-1zM711 235h1v7h-1zM719 235h1v7h-1zM727 235h1v7h-1zM735 235h1v7h-1zM743 235h1v7h-1zM751 235h1v7h-1zM759 235h1v7h-1zM767 235h1v7h-1zM775 235h1v7h-1z" fill="#5e625e" shape-rendering="crispEdges"/>
<path d="M16 73h1v2h-1zM17 73h1v2h-1zM18 73h1v2h-1zM19 73h1v2h-1zM20 73h1v2h-1zM21 73h1v4h-1zM22 71h1v6h-1zM23 71h1v6h-1zM24 71h1v6h-1zM25 71h1v6h-1zM26 71h1v6h-1zM27 71h1v4h-1zM28 71h1v4h-1zM29 71h1v4h-1zM30 71h1v6h-1zM31 71h1v6h-1zM32 71h1v6h-1zM33 71h1v8h-1zM34 73h1v4h-1zM35 73h1v4h-1zM36 73h1v4h-1zM37 73h1v4h-1zM38 71h1v6h-1zM39 71h1v6h-1zM40 73h1v4h-1zM41 71h1v8h-1zM42 71h1v6h-1zM43 71h1v6h-1zM44 71h1v6h-1zM45 71h1v6h-1zM46 73h1v4h-1zM47 73h1v4h-1zM48 73h1v6h-1zM49 73h1v4h-1zM50 71h1v6h-1zM51 71h1v4h-1zM52 71h1v4h-1zM53 71h1v4h-1zM54 71h1v4h-1zM55 71h1v4h-1zM56 71h1v6h-1zM57 73h1v4h-1zM58 73h1v4h-1zM59 71h1v6h-1zM60 71h1v6h-1zM61 71h1v6h-1zM62 71h1v6h-1zM63 71h1v4h-1zM64 71h1v4h-1zM65 73h1v2h-1zM66 73h1v2h-1zM67 73h1v4h-1zM68 73h1v4h-1zM69 71h1v6h-1zM70 71h1v8h-1zM71 71h1v6h-1zM72 71h1v6h-1zM73 73h1v4h-1zM74 73h1v6h-1zM75 73h1v4h-1zM76 73h1v4h-1zM77 71h1v6h-1zM78 73h1v4h-1zM79 73h1v4h-1zM80 73h1v6h-1zM81 71h1v6h-1zM82 73h1v4h-1zM83 73h1v4h-1zM84 73h1v4h-1zM85 73h1v4h-1zM86 71h1v6h-1zM87 73h1v4h-1zM88 73h1v4h-1zM89 73h1v2h-1zM90 73h1v2h-1zM91 71h1v4h-1zM92 71h1v4h-1zM93 73h1v2h-1zM94 73h1v2h-1zM95 73h1v2h-1zM96 73h1v2h-1zM97 71h1v4h-1zM98 71h1v4h-1zM99 71h1v4h-1zM100 71h1v4h-1zM101 71h1v6h-1zM102 71h1v8h-1zM103 71h1v6h-1zM104 71h1v6h-1zM105 71h1v6h-1zM106 71h1v6h-1zM107 71h1v6h-1zM108 73h1v4h-1zM109 71h1v6h-1zM110 71h1v6h-1zM111 71h1v6h-1zM112 71h1v6h-1zM113 71h1v6h-1zM114 71h1v6h-1zM115 71h1v6h-1zM116 73h1v2h-1zM117 73h1v2h-1zM118 73h1v2h-1zM119 73h1v2h-1zM120 73h1v2h-1zM121 73h1v4h-1zM122 73h1v4h-1zM123 73h1v6h-1zM124 73h1v4h-1zM125 73h1v4h-1zM126 71h1v6h-1zM127 71h1v4h-1zM128 71h1v6h-1zM129 71h1v8h-1zM130 71h1v6h-1zM131 71h1v8h-1zM132 73h1v4h-1zM133 71h1v4h-1zM134 71h1v4h-1zM135 71h1v4h-1zM136 71h1v4h-1zM137 71h1v4h-1zM138 71h1v4h-1zM139 71h1v4h-1zM140 73h1v4h-1zM141 73h1v4h-1zM142 71h1v4h-1zM143 71h1v4h-1zM144 71h1v4h-1zM145 71h1v4h-1zM146 73h1v2h-1zM147 71h1v6h-1zM148 71h1v6h-1zM149 71h1v6h-1zM150 71h1v6h-1zM151 71h1v6h-1zM152 73h1v4h-1zM153 73h1v4h-1zM154 73h1v4h-1zM155 73h1v4h-1zM156 71h1v6h-1zM157 71h1v6h-1zM158 73h1v4h-1zM159 73h1v2h-1zM160 73h1v4h-1zM161 73h1v6h-1zM162 73h1v4h-1zM163 73h1v2h-1zM164 71h1v4h-1zM165 73h1v2h-1zM166 73h1v2h-1zM167 73h1v4h-1zM168 73h1v4h-1zM169 73h1v4h-1zM170 71h1v6h-1zM171 71h1v6h-1zM172 71h1v6h-1zM173 71h1v6h-1zM174 71h1v6h-1zM175 71h1v6h-1zM176 73h1v2h-1zM177 71h1v4h-1zM178 71h1v8h-1zM179 71h1v4h-1zM180 71h1v4h-1zM181 71h1v4h-1zM182 71h1v4h-1zM183 71h1v6h-1zM184 71h1v6h-1zM185 73h1v2h-1zM186 71h1v4h-1zM187 71h1v4h-1zM188 71h1v4h-1zM189 71h1v4h-1zM190 71h1v4h-1zM191 71h1v4h-1zM192 73h1v2h-1zM193 73h1v2h-1zM194 73h1v2h-1zM195 71h1v4h-1zM196 73h1v2h-1zM197 73h1v6h-1zM198 71h1v6h-1zM199 71h1v6h-1zM200 71h1v6h-1zM201 71h1v6h-1zM202 71h1v6h-1zM203 73h1v4h-1zM204 73h1v6h-1zM205 73h1v4h-1zM206 73h1v2h-1zM207 73h1v2h-1zM208 73h1v4h-1zM209 73h1v6h-1zM210 71h1v4h-1zM211 71h1v4h-1zM212 71h1v4h-1zM213 71h1v4h-1zM214 71h1v4h-1zM215 73h1v2h-1zM216 73h1v2h-1zM217 73h1v2h-1zM218 73h1v2h-1zM219 71h1v6h-1zM220 71h1v8h-1zM221 73h1v4h-1zM222 73h1v4h-1zM223 73h1v4h-1zM224 73h1v6h-1zM225 73h1v4h-1zM226 71h1v6h-1zM227 71h1v6h-1zM228 71h1v8h-1zM229 71h1v6h-1zM230 71h1v6h-1zM231 71h1v6h-1zM232 71h1v6h-1zM233 71h1v6h-1zM234 71h1v6h-1zM235 71h1v6h-1zM236 71h1v6h-1zM237 71h1v6h-1zM238 71h1v6h-1zM239 71h1v6h-1zM240 73h1v4h-1zM241 73h1v4h-1zM242 71h1v6h-1zM243 71h1v6h-1zM244 71h1v6h-1zM245 71h1v6h-1zM246 73h1v4h-1zM247 73h1v2h-1zM248 73h1v2h-1zM249 73h1v2h-1zM250 71h1v4h-1zM251 71h1v4h-1zM252 71h1v4h-1zM253 73h1v2h-1zM254 73h1v2h-1zM255 73h1v4h-1zM256 73h1v2h-1zM257 73h1v2h-1zM258 71h1v4h-1zM259 71h1v4h-1zM260 71h1v4h-1zM261 71h1v6h-1zM262 71h1v6h-1zM263 71h1v8h-1zM264 71h1v6h-1zM265 71h1v6h-1zM266 71h1v6h-1zM267 73h1v4h-1zM268 73h1v4h-1zM269 73h1v4h-1zM270 73h1v4h-1zM271 73h1v4h-1zM272 71h1v6h-1zM273 71h1v6h-1zM274 71h1v6h-1zM275 71h1v6h-1zM276 71h1v6h-1zM277 71h1v8h-1zM278 71h1v8h-1zM279 71h1v6h-1zM280 73h1v4h-1zM281 73h1v4h-1zM282 71h1v6h-1zM283 71h1v6h-1zM284 71h1v6h-1zM285 71h1v6h-1zM286 71h1v6h-1zM287 71h1v6h-1zM288 71h1v6h-1zM289 73h1v4h-1zM290 73h1v4h-1zM291 73h1v4h-1zM292 73h1v4h-1zM293 73h1v4h-1zM294 73h1v4h-1zM295 71h1v4h-1zM296 71h1v4h-1zM297 73h1v2h-1zM298 73h1v2h-1zM299 73h1v2h-1zM300 73h1v4h-1zM301 73h1v4h-1zM302 71h1v6h-1zM303 71h1v8h-1zM304 71h1v6h-1zM305 73h1v4h-1zM306 71h1v6h-1zM307 71h1v6h-1zM308 71h1v6h-1zM309 71h1v6h-1zM310 69h1v5h-1zM311 67h1v5h-1zM312 66h1v5h-1zM313 64h1v5h-1zM314 62h1v6h-1zM315 61h1v5h-1zM316 59h1v5h-1zM317 59h1v6h-1zM318 59h1v6h-1zM319 59h1v6h-1zM320 59h1v6h-1zM321 61h1v2h-1zM322 61h1v2h-1zM323 59h1v4h-1zM324 61h1v2h-1zM325 61h1v2h-1zM326 61h1v4h-1zM327 61h1v2h-1zM328 59h1v4h-1zM329 59h1v4h-1zM330 61h1v2h-1zM331 61h1v2h-1zM332 61h1v2h-1zM333 59h1v4h-1zM334 59h1v4h-1zM335 59h1v6h-1zM336 59h1v6h-1zM337 61h1v4h-1zM338 61h1v2h-1zM339 61h1v2h-1zM340 61h1v2h-1zM341 59h1v4h-1zM342 59h1v4h-1zM343 59h1v6h-1zM344 61h1v4h-1zM345 61h1v4h-1zM346 59h1v6h-1zM347 61h1v4h-1zM348 61h1v2h-1zM349 59h1v4h-1zM350 59h1v4h-1zM351 59h1v4h-1zM352 59h1v6h-1zM353 59h1v6h-1zM354 59h1v6h-1zM355 59h1v6h-1zM356 59h1v6h-1zM357 59h1v4h-1zM358 59h1v4h-1zM359 59h1v4h-1zM360 59h1v4h-1zM361 61h1v4h-1zM362 59h1v6h-1zM363 59h1v4h-1zM364 59h1v4h-1zM365 61h1v2h-1zM366 59h1v4h-1zM367 59h1v4h-1zM368 61h1v2h-1zM369 61h1v2h-1zM370 61h1v2h-1zM371 61h1v4h-1zM372 59h1v6h-1zM373 59h1v6h-1zM374 59h1v4h-1zM375 61h1v2h-1zM376 59h1v4h-1zM377 61h1v2h-1zM378 61h1v4h-1zM379 61h1v2h-1zM380 61h1v4h-1zM381 61h1v2h-1zM382 61h1v2h-1zM383 59h1v6h-1zM384 59h1v4h-1zM385 61h1v4h-1zM386 59h1v4h-1zM387 61h1v2h-1zM388 61h1v2h-1zM389 61h1v2h-1zM390 61h1v2h-1zM391 61h1v4h-1zM392 61h1v4h-1zM393 61h1v2h-1zM394 61h1v2h-1zM395 59h1v4h-1zM396 61h1v2h-1zM397 61h1v2h-1zM398 61h1v4h-1zM399 61h1v4h-1zM400 61h1v2h-1zM401 59h1v4h-1zM402 59h1v4h-1zM403 59h1v6h-1zM404 61h1v4h-1zM405 61h1v4h-1zM406 61h1v4h-1zM407 61h1v4h-1zM408 61h1v2h-1zM409 59h1v6h-1zM410 59h1v4h-1zM411 59h1v4h-1zM412 59h1v4h-1zM413 61h1v4h-1zM414 59h1v6h-1zM415 61h1v2h-1zM416 61h1v2h-1zM417 59h1v4h-1zM418 61h1v2h-1zM419 61h1v2h-1zM420 59h1v4h-1zM421 59h1v4h-1zM422 59h1v4h-1zM423 59h1v4h-1zM424 59h1v4h-1zM425 59h1v6h-1zM426 61h1v4h-1zM427 61h1v2h-1zM428 61h1v2h-1zM429 61h1v4h-1zM430 59h1v6h-1zM431 61h1v4h-1zM432 61h1v2h-1zM433 59h1v6h-1zM434 61h1v2h-1zM435 61h1v4h-1zM436 59h1v4h-1zM437 59h1v4h-1zM438 59h1v4h-1zM439 59h1v4h-1zM440 59h1v4h-1zM441 59h1v4h-1zM442 59h1v4h-1zM443 59h1v6h-1zM444 59h1v6h-1zM445 59h1v4h-1zM446 59h1v4h-1zM447 61h1v2h-1zM448 61h1v2h-1zM449 61h1v2h-1zM450 61h1v2h-1zM451 61h1v4h-1zM452 59h1v6h-1zM453 59h1v4h-1zM454 59h1v4h-1zM455 59h1v6h-1zM456 59h1v6h-1zM457 59h1v6h-1zM458 59h1v6h-1zM459 59h1v4h-1zM460 59h1v4h-1zM461 59h1v6h-1zM462 59h1v6h-1zM463 61h1v4h-1zM464 61h1v4h-1zM465 61h1v4h-1zM466 59h1v6h-1zM467 59h1v4h-1zM468 59h1v4h-1zM469 59h1v4h-1zM470 59h1v4h-1zM471 59h1v6h-1zM472 59h1v6h-1zM473 59h1v4h-1zM474 61h1v2h-1zM475 61h1v2h-1zM476 61h1v2h-1zM477 61h1v4h-1zM478 61h1v4h-1zM479 61h1v2h-1zM480 59h1v6h-1zM481 59h1v6h-1zM482 61h1v4h-1zM483 61h1v2h-1zM484 59h1v4h-1zM485 61h1v4h-1zM486 59h1v6h-1zM487 61h1v4h-1zM488 61h1v4h-1zM489 59h1v4h-1zM490 59h1v4h-1zM491 59h1v4h-1zM492 61h1v4h-1zM493 61h1v4h-1zM494 61h1v4h-1zM495 59h1v6h-1zM496 59h1v6h-1zM497 61h1v4h-1zM498 61h1v2h-1zM499 59h1v6h-1zM500 59h1v6h-1zM501 59h1v4h-1zM502 59h1v4h-1zM503 59h1v4h-1zM504 59h1v4h-1zM505 59h1v4h-1zM506 59h1v4h-1zM507 61h1v4h-1zM508 61h1v2h-1zM509 61h1v2h-1zM510 61h1v2h-1zM511 61h1v4h-1zM512 59h1v6h-1zM513 61h1v4h-1zM514 61h1v2h-1zM515 61h1v2h-1zM516 59h1v6h-1zM517 59h1v6h-1zM518 59h1v4h-1zM519 59h1v4h-1zM520 59h1v4h-1zM521 59h1v4h-1zM522 61h1v2h-1zM523 59h1v6h-1zM524 59h1v4h-1zM525 59h1v4h-1zM526 59h1v4h-1zM527 61h1v2h-1zM528 61h1v4h-1zM529 61h1v2h-1zM530 61h1v2h-1zM531 61h1v2h-1zM532 61h1v2h-1zM533 61h1v4h-1zM534 61h1v4h-1zM535 61h1v2h-1zM536 61h1v2h-1zM537 61h1v2h-1zM538 59h1v4h-1zM539 59h1v4h-1zM540 59h1v4h-1zM541 61h1v4h-1zM542 61h1v4h-1zM543 59h1v4h-1zM544 61h1v2h-1zM545 61h1v2h-1zM546 59h1v4h-1zM547 59h1v4h-1zM548 59h1v4h-1zM549 59h1v4h-1zM550 61h1v2h-1zM551 61h1v4h-1zM552 59h1v4h-1zM553 59h1v4h-1zM554 59h1v4h-1zM555 59h1v4h-1zM556 59h1v4h-1zM557 59h1v4h-1zM558 59h1v4h-1zM559 61h1v4h-1zM560 59h1v4h-1zM561 61h1v2h-1zM562 59h1v4h-1zM563 59h1v4h-1zM564 59h1v4h-1zM565 59h1v4h-1zM566 59h1v4h-1zM567 61h1v2h-1zM568 61h1v2h-1zM569 61h1v4h-1zM570 59h1v6h-1zM571 59h1v6h-1zM572 59h1v6h-1zM573 61h1v4h-1zM574 61h1v2h-1zM575 61h1v2h-1zM576 61h1v4h-1zM577 59h1v6h-1zM578 59h1v4h-1zM579 61h1v4h-1zM580 61h1v4h-1zM581 61h1v2h-1zM582 61h1v2h-1zM583 61h1v2h-1zM584 61h1v2h-1zM585 61h1v2h-1zM586 59h1v4h-1zM587 59h1v6h-1zM588 59h1v4h-1zM589 59h1v4h-1zM590 61h1v2h-1zM591 61h1v2h-1zM592 61h1v2h-1zM593 59h1v6h-1zM594 61h1v4h-1zM595 61h1v4h-1zM596 59h1v4h-1zM597 59h1v4h-1zM598 59h1v6h-1zM599 61h1v4h-1zM600 61h1v2h-1zM601 59h1v6h-1zM602 59h1v6h-1zM603 61h1v2h-1zM604 61h1v2h-1zM605 59h1v4h-1zM606 59h1v4h-1zM607 61h1v4h-1zM608 61h1v2h-1zM609 59h1v4h-1zM610 59h1v4h-1zM611 59h1v4h-1zM612 59h1v4h-1zM613 61h1v2h-1zM614 61h1v4h-1zM615 61h1v4h-1zM616 59h1v4h-1zM617 59h1v4h-1zM618 61h1v2h-1zM619 61h1v4h-1zM620 59h1v6h-1zM621 59h1v6h-1zM622 59h1v6h-1zM623 61h1v4h-1zM624 61h1v4h-1zM625 59h1v4h-1zM626 59h1v4h-1zM627 59h1v6h-1zM628 59h1v6h-1zM629 59h1v6h-1zM630 59h1v6h-1zM631 61h1v2h-1zM632 61h1v2h-1zM633 59h1v6h-1zM634 59h1v4h-1zM635 59h1v4h-1zM636 61h1v2h-1zM637 61h1v2h-1zM638 59h1v6h-1zM639 61h1v4h-1zM640 61h1v2h-1zM641 61h1v2h-1zM642 61h1v2h-1zM643 59h1v4h-1zM644 59h1v4h-1zM645 61h1v4h-1zM646 61h1v4h-1zM647 59h1v4h-1zM648 59h1v4h-1zM649 61h1v2h-1zM650 59h1v4h-1zM651 59h1v6h-1zM652 59h1v6h-1zM653 59h1v6h-1zM654 59h1v6h-1zM655 59h1v6h-1zM656 61h1v4h-1zM657 61h1v2h-1zM658 61h1v2h-1zM659 59h1v6h-1zM660 61h1v2h-1zM661 59h1v4h-1zM662 59h1v6h-1zM663 61h1v4h-1zM664 61h1v4h-1zM665 59h1v6h-1zM666 59h1v4h-1zM667 59h1v6h-1zM668 59h1v6h-1zM669 61h1v2h-1zM670 61h1v4h-1zM671 61h1v2h-1zM672 61h1v2h-1zM673 61h1v2h-1zM674 61h1v2h-1zM675 61h1v2h-1zM676 61h1v4h-1zM677 61h1v2h-1zM678 61h1v4h-1zM679 61h1v2h-1zM680 61h1v2h-1zM681 61h1v2h-1zM682 59h1v4h-1zM683 59h1v4h-1zM684 59h1v4h-1zM685 61h1v2h-1zM686 61h1v2h-1zM687 61h1v2h-1zM688 61h1v2h-1zM689 61h1v4h-1zM690 61h1v2h-1zM691 61h1v4h-1zM692 59h1v4h-1zM693 59h1v4h-1zM694 61h1v4h-1zM695 59h1v4h-1zM696 59h1v4h-1zM697 59h1v4h-1zM698 59h1v4h-1zM699 59h1v4h-1zM700 61h1v2h-1zM701 61h1v4h-1zM702 59h1v6h-1zM703 61h1v2h-1zM704 61h1v2h-1zM705 61h1v4h-1zM706 59h1v6h-1zM707 61h1v4h-1zM708 61h1v2h-1zM709 61h1v2h-1zM710 61h1v2h-1zM711 61h1v2h-1zM712 59h1v6h-1zM713 59h1v6h-1zM714 59h1v6h-1zM715 61h1v2h-1zM716 59h1v4h-1zM717 59h1v4h-1zM718 59h1v4h-1zM719 61h1v4h-1zM720 59h1v6h-1zM721 61h1v2h-1zM722 61h1v4h-1zM723 61h1v4h-1zM724 61h1v2h-1zM725 61h1v4h-1zM726 59h1v6h-1zM727 59h1v6h-1zM728 61h1v4h-1zM729 61h1v4h-1zM730 61h1v2h-1zM731 59h1v4h-1zM732 61h1v4h-1zM733 61h1v2h-1zM734 61h1v4h-1zM735 59h1v6h-1zM736 59h1v4h-1zM737 61h1v2h-1zM738 61h1v2h-1zM739 59h1v6h-1zM740 59h1v4h-1zM741 61h1v4h-1zM742 61h1v4h-1zM743 59h1v4h-1zM744 59h1v6h-1zM745 59h1v6h-1zM746 61h1v2h-1zM747 59h1v4h-1zM748 61h1v2h-1zM749 61h1v2h-1zM750 61h1v2h-1zM751 61h1v4h-1zM752 59h1v6h-1zM753 59h1v6h-1zM754 61h1v2h-1zM755 61h1v2h-1zM756 59h1v4h-1zM757 59h1v6h-1zM758 61h1v4h-1zM759 61h1v4h-1zM760 59h1v6h-1zM761 61h1v4h-1zM762 61h1v4h-1zM763 61h1v2h-1zM764 59h1v4h-1zM765 59h1v6h-1zM766 59h1v4h-1zM767 59h1v6h-1zM768 61h1v4h-1zM769 59h1v6h-1zM770 61h1v4h-1zM771 61h1v4h-1zM772 61h1v4h-1zM773 61h1v2h-1zM774 61h1v4h-1zM775 61h1v4h-1zM776 59h1v6h-1zM777 59h1v4h-1zM778 59h1v4h-1zM779 59h1v6h-1zM780 59h1v4h-1zM781 61h1v2h-1zM782 59h1v6h-1z" fill="#00ffff" shape-rendering="crispEdges"/>
<path d="M16 233h1v6h-1zM17 233h1v6h-1zM18 233h1v6h-1zM19 233h1v6h-1zM20 233h1v6h-1zM21 233h1v6h-1zM22 233h1v6h-1zM23 233h1v6h-1zM24 233h1v6h-1zM25 233h1v6h-1zM26 233h1v4h-1zM27 233h1v4h-1zM28 233h1v4h-1zM29 233h1v4h-1zM30 233h1v6h-1zM31 233h1v6h-1zM32 233h1v6h-1zM33 233h1v6h-1zM34 233h1v6h-1zM35 233h1v6h-1zM36 233h1v6h-1zM37 235h1v4h-1zM38 235h1v4h-1zM39 235h1v4h-1zM40 233h1v6h-1zM41 233h1v6h-1zM42 233h1v6h-1zM43 233h1v4h-1zM44 235h1v2h-1zM45 233h1v4h-1zM46 233h1v6h-1zM47 233h1v6h-1zM48 235h1v4h-1zM49 235h1v4h-1zM50 233h1v6h-1zM51 233h1v6h-1zM52 233h1v6h-1zM53 233h1v6h-1zM54 233h1v6h-1zM55 233h1v6h-1zM56 233h1v6h-1zM57 233h1v6h-1zM58 233h1v4h-1zM59 233h1v4h-1zM60 233h1v4h-1zM61 233h1v6h-1zM62 233h1v6h-1zM63 235h1v4h-1zM64 235h1v4h-1zM65 235h1v4h-1zM66 235h1v4h-1zM67 235h1v2h-1zM68 233h1v4h-1zM69 233h1v4h-1zM70 233h1v6h-1zM71 233h1v6h-1zM72 233h1v6h-1zM73 233h1v6h-1zM74 233h1v6h-1zM75 233h1v6h-1zM76 235h1v4h-1zM77 235h1v2h-1zM78 235h1v2h-1zM79 235h1v2h-1zM80 235h1v2h-1zM81 233h1v6h-1zM82 233h1v6h-1zM83 233h1v6h-1zM84 233h1v6h-1zM85 233h1v6h-1zM86 233h1v6h-1zM87 233h1v4h-1zM88 235h1v2h-1zM89 235h1v2h-1zM90 235h1v2h-1zM91 233h1v4h-1zM92 233h1v4h-1zM93 233h1v6h-1zM94 233h1v6h-1zM95 233h1v6h-1zM96 233h1v6h-1zM97 233h1v6h-1zM98 233h1v6h-1zM99 233h1v4h-1zM100 233h1v4h-1zM101 225h1v11h-1zM102 222h1v51h-1zM103 268h1v18h-1zM104 204h1v65h-1zM105 154h1v51h-1zM106 151h1v11h-1zM107 161h1v41h-1zM108 201h1v51h-1zM109 251h1v31h-1zM110 267h1v16h-1zM111 208h1v60h-1zM112 162h1v47h-1zM113 159h1v17h-1zM114 175h1v58h-1zM115 232h1v47h-1zM116 266h1v15h-1zM117 212h1v55h-1zM118 170h1v43h-1zM119 167h1v9h-1zM120 175h1v36h-1zM121 210h1v44h-1zM122 253h1v26h-1zM123 266h1v15h-1zM124 215h1v52h-1zM125 176h1v40h-1zM126 173h1v14h-1zM127 186h1v50h-1zM128 235h1v39h-1zM129 263h1v14h-1zM130 216h1v48h-1zM131 179h1v38h-1zM132 177h1v8h-1zM133 184h1v31h-1zM134 214h1v38h-1zM135 251h1v23h-1zM136 262h1v13h-1zM137 218h1v45h-1zM138 183h1v36h-1zM139 181h1v13h-1zM140 193h1v44h-1zM141 236h1v35h-1zM142 261h1v12h-1zM143 220h1v42h-1zM144 187h1v34h-1zM145 185h1v12h-1zM146 196h1v41h-1zM147 236h1v33h-1zM148 264h1v7h-1zM149 239h1v26h-1zM150 208h1v32h-1zM151 190h1v19h-1zM152 189h1v11h-1zM153 199h1v39h-1zM154 237h1v31h-1zM155 259h1v11h-1zM156 223h1v37h-1zM157 195h1v29h-1zM158 193h1v11h-1zM159 203h1v36h-1zM160 238h1v29h-1zM161 263h1v6h-1zM162 240h1v24h-1zM163 212h1v29h-1zM164 196h1v17h-1zM165 195h1v10h-1zM166 204h1v35h-1zM167 238h1v27h-1zM168 257h1v10h-1zM169 225h1v33h-1zM170 201h1v25h-1zM171 199h1v9h-1zM172 207h1v33h-1zM173 239h1v25h-1zM174 260h1v6h-1zM175 240h1v21h-1zM176 215h1v26h-1zM177 201h1v15h-1zM178 200h1v18h-1zM179 217h1v43h-1zM180 258h1v5h-1zM181 240h1v19h-1zM182 218h1v23h-1zM183 205h1v14h-1zM184 204h1v8h-1zM185 211h1v28h-1zM186 238h1v22h-1zM187 253h1v8h-1zM188 227h1v27h-1zM189 206h1v22h-1zM190 205h1v8h-1zM191 212h1v26h-1zM192 237h1v21h-1zM193 255h1v5h-1zM194 239h1v17h-1zM195 219h1v21h-1zM196 208h1v12h-1zM197 207h1v8h-1zM198 214h1v25h-1zM199 238h1v20h-1zM200 252h1v8h-1zM201 228h1v25h-1zM202 209h1v20h-1zM203 208h1v7h-1zM204 214h1v24h-1zM205 237h1v19h-1zM206 253h1v4h-1zM207 238h1v16h-1zM208 221h1v18h-1zM209 210h1v12h-1zM210 210h1v6h-1zM211 215h1v23h-1zM212 237h1v18h-1zM213 250h1v6h-1zM214 229h1v22h-1zM215 214h1v16h-1zM216 213h1v6h-1zM217 218h1v21h-1zM218 238h1v16h-1zM219 249h1v6h-1zM220 230h1v20h-1zM221 215h1v16h-1zM222 214h1v6h-1zM223 219h1v20h-1zM224 238h1v16h-1zM225 251h1v4h-1zM226 239h1v13h-1zM227 223h1v17h-1zM228 214h1v10h-1zM229 214h1v6h-1zM230 219h1v20h-1zM231 238h1v16h-1zM232 249h1v6h-1zM233 231h1v19h-1zM234 216h1v16h-1zM235 216h1v5h-1zM236 220h1v19h-1zM237 238h1v15h-1zM238 248h1v6h-1zM239 231h1v18h-1zM240 218h1v14h-1zM241 217h1v6h-1zM242 222h1v17h-1zM243 238h1v15h-1zM244 248h1v5h-1zM245 231h1v18h-1zM246 218h1v14h-1zM247 218h1v5h-1zM248 222h1v16h-1zM249 237h1v14h-1zM250 248h1v3h-1zM251 238h1v11h-1zM252 225h1v14h-1zM253 218h1v8h-1zM254 218h1v13h-1zM255 230h1v42h-1zM256 271h1v17h-1zM257 283h1v5h-1zM258 283h1v5h-1zM259 284h1v5h-1zM260 284h1v4h-1zM261 282h1v7h-1zM262 282h1v5h-1zM263 281h1v6h-1zM264 281h1v7h-1zM265 281h1v5h-1zM266 281h1v4h-1zM267 279h1v6h-1zM268 280h1v4h-1zM269 279h1v5h-1zM270 279h1v4h-1zM271 277h1v6h-1zM272 276h1v7h-1zM273 275h1v6h-1zM274 275h1v5h-1zM275 275h1v4h-1zM276 273h1v7h-1zM277 273h1v5h-1zM278 272h1v5h-1zM279 270h1v6h-1zM280 271h1v4h-1zM281 269h1v6h-1zM282 269h1v5h-1zM283 268h1v5h-1zM284 266h1v7h-1zM285 267h1v4h-1zM286 266h1v5h-1zM287 265h1v5h-1zM288 263h1v6h-1zM289 263h1v5h-1zM290 262h1v5h-1zM291 260h1v6h-1zM292 259h1v6h-1zM293 257h1v6h-1zM294 256h1v6h-1zM295 255h1v5h-1zM296 253h1v8h-1zM297 252h1v8h-1zM298 250h1v7h-1zM299 248h1v6h-1zM300 247h1v5h-1zM301 244h1v7h-1zM302 243h1v6h-1zM303 242h1v6h-1zM304 240h1v6h-1zM305 239h1v5h-1zM306 238h1v5h-1zM307 237h1v5h-1zM308 234h1v7h-1zM309 63h1v176h-1zM310 59h1v9h-1zM311 55h1v9h-1zM312 55h1v4h-1zM313 51h1v8h-1zM314 52h1v4h-1zM315 51h1v5h-1zM316 51h1v3h-1zM317 49h1v5h-1zM318 49h1v7h-1zM319 55h1v136h-1zM320 190h1v51h-1zM321 239h1v2h-1zM322 237h1v6h-1zM323 237h1v4h-1zM324 237h1v4h-1zM325 237h1v6h-1zM326 237h1v4h-1zM327 239h1v2h-1zM328 239h1v4h-1zM329 239h1v2h-1zM330 239h1v4h-1zM331 237h1v6h-1zM332 237h1v4h-1zM333 237h1v4h-1zM334 237h1v4h-1zM335 237h1v4h-1zM336 237h1v6h-1zM337 237h1v6h-1zM338 237h1v6h-1zM339 237h1v6h-1zM340 237h1v6h-1zM341 237h1v6h-1zM342 237h1v6h-1zM343 237h1v6h-1zM344 239h1v4h-1zM345 237h1v6h-1zM346 237h1v4h-1zM347 239h1v2h-1zM348 239h1v2h-1zM349 237h1v4h-1zM350 237h1v4h-1zM351 234h1v6h-1zM352 231h1v7h-1zM353 229h1v7h-1zM354 228h1v6h-1zM355 229h1v4h-1zM356 228h1v6h-1zM357 229h1v7h-1zM358 233h1v7h-1zM359 237h1v6h-1zM360 239h1v4h-1zM361 239h1v5h-1zM362 237h1v5h-1zM363 235h1v6h-1zM364 231h1v7h-1zM365 230h1v6h-1zM366 229h1v4h-1zM367 228h1v5h-1zM368 229h1v4h-1zM369 230h1v7h-1zM370 233h1v6h-1zM371 236h1v5h-1zM372 238h1v4h-1zM373 238h1v4h-1zM374 236h1v6h-1zM375 233h1v6h-1zM376 232h1v6h-1zM377 230h1v5h-1zM378 229h1v5h-1zM379 229h1v4h-1zM380 230h1v5h-1zM381 232h1v5h-1zM382 234h1v5h-1zM383 236h1v5h-1zM384 237h1v6h-1zM385 237h1v6h-1zM386 237h1v4h-1zM387 234h1v6h-1zM388 231h1v6h-1zM389 229h1v7h-1zM390 230h1v4h-1zM391 228h1v5h-1zM392 229h1v6h-1zM393 231h1v6h-1zM394 233h1v7h-1zM395 237h1v5h-1zM396 238h1v4h-1zM397 237h1v4h-1zM398 234h1v6h-1zM399 233h1v5h-1zM400 232h1v4h-1zM401 231h1v5h-1zM402 231h1v4h-1zM403 231h1v5h-1zM404 233h1v4h-1zM405 234h1v5h-1zM406 236h1v5h-1zM407 238h1v3h-1zM408 237h1v4h-1zM409 236h1v5h-1zM410 235h1v4h-1zM411 232h1v7h-1zM412 232h1v4h-1zM413 232h1v3h-1zM414 230h1v6h-1zM415 232h1v5h-1zM416 232h1v5h-1zM417 233h1v6h-1zM418 236h1v5h-1zM419 237h1v3h-1zM420 237h1v3h-1zM421 236h1v5h-1zM422 234h1v5h-1zM423 232h1v5h-1zM424 231h1v6h-1zM425 231h1v4h-1zM426 230h1v4h-1zM427 230h1v5h-1zM428 232h1v5h-1zM429 234h1v5h-1zM430 234h1v6h-1zM431 237h1v3h-1zM432 235h1v6h-1zM433 235h1v4h-1zM434 232h1v6h-1zM435 232h1v4h-1zM436 231h1v4h-1zM437 230h1v4h-1zM438 230h1v6h-1zM439 232h1v5h-1zM440 234h1v4h-1zM441 235h1v5h-1zM442 236h1v5h-1zM443 237h1v4h-1zM444 236h1v4h-1zM445 234h1v6h-1zM446 232h1v5h-1zM447 231h1v5h-1zM448 231h1v4h-1zM449 231h1v3h-1zM450 231h1v4h-1zM451 232h1v5h-1zM452 233h1v5h-1zM453 235h1v5h-1zM454 237h1v4h-1zM455 236h1v5h-1zM456 236h1v5h-1zM457 233h1v6h-1zM458 233h1v5h-1zM459 231h1v5h-1zM460 231h1v4h-1zM461 230h1v4h-1zM462 231h1v5h-1zM463 232h1v5h-1zM464 234h1v4h-1zM465 235h1v5h-1zM466 236h1v5h-1zM467 237h1v4h-1zM468 236h1v5h-1zM469 233h1v6h-1zM470 233h1v4h-1zM471 230h1v6h-1zM472 231h1v3h-1zM473 231h1v4h-1zM474 231h1v5h-1zM475 231h1v5h-1zM476 233h1v5h-1zM477 234h1v5h-1zM478 236h1v5h-1zM479 236h1v5h-1zM480 235h1v4h-1zM481 233h1v5h-1zM482 232h1v4h-1zM483 231h1v4h-1zM484 230h1v5h-1zM485 231h1v4h-1zM486 232h1v4h-1zM487 232h1v6h-1zM488 234h1v4h-1zM489 235h1v4h-1zM490 231h1v6h-1zM491 231h1v6h-1zM492 233h1v4h-1zM493 233h1v6h-1zM494 233h1v4h-1zM495 233h1v6h-1zM496 233h1v4h-1zM497 231h1v6h-1zM498 233h1v4h-1zM499 233h1v4h-1zM500 233h1v6h-1zM501 233h1v4h-1zM502 233h1v4h-1zM503 233h1v6h-1zM504 233h1v4h-1zM505 233h1v6h-1zM506 233h1v4h-1zM507 233h1v4h-1zM508 233h1v6h-1zM509 233h1v6h-1zM510 233h1v4h-1zM511 233h1v4h-1zM512 233h1v4h-1zM513 233h1v4h-1zM514 233h1v4h-1zM515 233h1v4h-1zM516 233h1v4h-1zM517 233h1v4h-1zM518 233h1v6h-1zM519 233h1v4h-1zM520 233h1v6h-1zM521 231h1v6h-1zM522 233h1v6h-1zM523 233h1v4h-1zM524 233h1v4h-1zM525 233h1v6h-1zM526 233h1v6h-1zM527 233h1v6h-1zM528 233h1v6h-1zM529 233h1v4h-1zM530 233h1v4h-1zM531 233h1v4h-1zM532 233h1v6h-1zM533 231h1v8h-1zM534 233h1v4h-1zM535 233h1v4h-1zM536 231h1v6h-1zM537 233h1v4h-1zM538 233h1v4h-1zM539 233h1v4h-1zM540 233h1v6h-1zM541 233h1v4h-1zM542 233h1v4h-1zM543 233h1v4h-1zM544 233h1v4h-1zM545 233h1v4h-1zM546 233h1v6h-1zM547 233h1v4h-1zM548 233h1v4h-1zM549 233h1v4h-1zM550 233h1v4h-1zM551 233h1v6h-1zM552 233h1v6h-1zM553 233h1v4h-1zM554 233h1v4h-1zM555 233h1v4h-1zM556 233h1v4h-1zM557 231h1v6h-1zM558 233h1v6h-1zM559 233h1v4h-1zM560 231h1v6h-1zM561 233h1v4h-1zM562 233h1v4h-1zM563 233h1v4h-1zM564 233h1v4h-1zM565 233h1v4h-1zM566 233h1v4h-1zM567 233h1v4h-1zM568 233h1v6h-1zM569 233h1v6h-1zM570 233h1v6h-1zM571 233h1v4h-1zM572 233h1v4h-1zM573 233h1v4h-1zM574 233h1v4h-1zM575 233h1v4h-1zM576 233h1v4h-1zM577 233h1v6h-1zM578 231h1v6h-1zM579 233h1v4h-1zM580 233h1v4h-1zM581 233h1v4h-1zM582 233h1v4h-1zM583 233h1v4h-1zM584 233h1v4h-1zM585 233h1v4h-1zM586 233h1v6h-1zM587 233h1v4h-1zM588 231h1v6h-1zM589 231h1v6h-1zM590 233h1v4h-1zM591 233h1v6h-1zM592 233h1v6h-1zM593 233h1v6h-1zM594 233h1v4h-1zM595 233h1v6h-1zM596 233h1v4h-1zM597 233h1v6h-1zM598 233h1v4h-1zM599 233h1v4h-1zM600 233h1v4h-1zM601 233h1v4h-1zM602 233h1v4h-1zM603 233h1v4h-1zM604 233h1v4h-1zM605 233h1v4h-1zM606 233h1v4h-1zM607 231h1v6h-1zM608 233h1v4h-1zM609 233h1v4h-1zM610 233h1v4h-1zM611 233h1v6h-1zM612 233h1v4h-1zM613 233h1v4h-1zM614 233h1v4h-1zM615 233h1v6h-1zM616 233h1v6h-1zM617 231h1v8h-1zM618 233h1v4h-1zM619 233h1v4h-1zM620 233h1v4h-1zM621 233h1v4h-1zM622 233h1v6h-1zM623 233h1v6h-1zM624 233h1v4h-1zM625 233h1v4h-1zM626 233h1v6h-1zM627 233h1v4h-1zM628 233h1v4h-1zM629 233h1v4h-1zM630 233h1v4h-1zM631 233h1v4h-1zM632 233h1v4h-1zM633 233h1v6h-1zM634 233h1v4h-1zM635 231h1v6h-1zM636 231h1v8h-1zM637 233h1v6h-1zM638 233h1v6h-1zM639 233h1v4h-1zM640 233h1v4h-1zM641 235h1v5h-1zM642 233h1v7h-1zM643 233h1v5h-1zM644 235h1v3h-1zM645 235h1v5h-1zM646 235h1v3h-1zM647 235h1v3h-1zM648 233h1v5h-1zM649 235h1v3h-1zM650 235h1v5h-1zM651 233h1v7h-1zM652 235h1v3h-1zM653 235h1v3h-1zM654 235h1v5h-1zM655 235h1v5h-1zM656 235h1v5h-1zM657 235h1v5h-1zM658 235h1v5h-1zM659 235h1v5h-1zM660 235h1v5h-1zM661 235h1v5h-1zM662 235h1v3h-1zM663 235h1v3h-1zM664 235h1v3h-1zM665 235h1v5h-1zM666 235h1v5h-1zM667 235h1v3h-1zM668 235h1v5h-1zM669 235h1v5h-1zM670 235h1v3h-1zM671 235h1v5h-1zM672 235h1v4h-1zM673 235h1v2h-1zM674 235h1v2h-1zM675 235h1v2h-1zM676 235h1v4h-1zM677 235h1v2h-1zM678 235h1v2h-1zM679 233h1v4h-1zM680 233h1v4h-1zM681 233h1v4h-1zM682 235h1v2h-1zM683 235h1v2h-1zM684 235h1v2h-1zM685 233h1v6h-1zM686 233h1v6h-1zM687 233h1v6h-1zM688 233h1v6h-1zM689 235h1v4h-1zM690 235h1v2h-1zM691 235h1v2h-1zM692 235h1v2h-1zM693 235h1v2h-1zM694 235h1v2h-1zM695 235h1v2h-1zM696 213h1v25h-1zM697 175h1v39h-1zM698 171h1v18h-1zM699 179h1v49h-1zM700 227h1v13h-1zM701 235h1v4h-1zM702 235h1v4h-1zM703 235h1v4h-1zM704 235h1v4h-1zM705 235h1v6h-1zM706 237h1v4h-1zM707 237h1v4h-1zM708 237h1v4h-1zM709 235h1v4h-1zM710 235h1v4h-1zM711 235h1v4h-1zM712 235h1v4h-1zM713 237h1v2h-1zM714 237h1v2h-1zM715 235h1v6h-1zM716 235h1v6h-1zM717 235h1v6h-1zM718 237h1v4h-1zM719 237h1v4h-1zM720 237h1v4h-1zM721 235h1v6h-1zM722 235h1v6h-1zM723 235h1v6h-1zM724 237h1v4h-1zM725 237h1v4h-1zM726 235h1v6h-1zM727 233h1v4h-1zM728 232h1v6h-1zM729 231h1v4h-1zM730 231h1v4h-1zM731 231h1v4h-1zM732 231h1v4h-1zM733 231h1v4h-1zM734 231h1v4h-1zM735 232h1v6h-1zM736 233h1v7h-1zM737 233h1v4h-1zM738 233h1v4h-1zM739 233h1v5h-1zM740 233h1v4h-1zM741 232h1v6h-1zM742 231h1v4h-1zM743 231h1v4h-1zM744 231h1v4h-1zM745 231h1v4h-1zM746 231h1v4h-1zM747 232h1v6h-1zM748 233h1v5h-1zM749 233h1v4h-1zM750 233h1v4h-1zM751 233h1v4h-1zM752 233h1v4h-1zM753 233h1v4h-1zM754 232h1v6h-1zM755 231h1v4h-1zM756 231h1v4h-1zM757 231h1v4h-1zM758 231h1v4h-1zM759 232h1v6h-1zM760 233h1v5h-1zM761 233h1v5h-1zM762 233h1v5h-1zM763 233h1v5h-1zM764 233h1v7h-1zM765 232h1v6h-1zM766 231h1v4h-1zM767 231h1v4h-1zM768 231h1v4h-1zM769 231h1v4h-1zM770 231h1v4h-1zM771 231h1v4h-1zM772 232h1v6h-1zM773 233h1v4h-1zM774 233h1v4h-1zM775 233h1v5h-1zM776 233h1v6h-1zM777 233h1v4h-1zM778 232h1v6h-1zM779 231h1v4h-1zM780 231h1v4h-1zM781 231h1v4h-1zM782 231h1v4h-1z" fill="#ffff00" shape-rendering="crispEdges"/>

<!-- cursor label -->
<path d="M66 29H136V41L133 44.5H107L101.5 51.5L96 44.5H69L66 41Z" fill="#4a7cf2"/>
<text x="70" y="43" font-size="17" fill="#fff" stroke="#4a7cf2" stroke-width="0.25" textLength="62" lengthAdjust="spacingAndGlyphs">2.980ms</text>

<!-- left CH2 marker -->
<path d="M0 232H8.5L15 239L8.5 246H0Z" fill="#00ffff"/>
<text x="0.2" y="244.6" font-size="16.5" font-weight="bold" fill="#ffff00" stroke="#ffff00" stroke-width="0.5" textLength="8.6" lengthAdjust="spacingAndGlyphs">2</text>
<text x="1.3" y="243.6" font-size="13.5" fill="#2828a0" textLength="6.6" lengthAdjust="spacingAndGlyphs">2</text>
<!-- right trigger marker -->
<path d="M784 259V274L771 266.5Z" fill="#ffff00"/>

<!-- ===== top bar ===== -->
<g fill="#ffff00" shape-rendering="crispEdges">
<path fill-rule="evenodd" d="M25 7h3v5h5v-5h3v14h-3v-6h-5v6h-3z"/>
<path fill-rule="evenodd" d="M39 10h26v11h-26zM43 12h5v2h-5zM42 16h6v3h-6zM51 11h2v8h-2zM57 12h5v9h-5zM39 13h1v1h-1z"/>
<path d="M68 7h3v3h4v2h-4v7h4v2h-7z"/>
<path fill-rule="evenodd" d="M77 10h12v7h-9v2h15v2h-18zM80 12h6v2h-6z"/>
<path d="M92 7h3v14h-3z"/>
</g>
<path d="M95 13.2L99.6 10H102.8L95 16.2ZM95 14.6L102.8 21H99.2L95 17.6Z" fill="#ffff00"/>

<rect x="145.5" y="3.5" width="22" height="20" fill="#000" stroke="#b4b0a8" stroke-width="1"/>
<path d="M147 9.5C148 6 149.5 6 151 8.5S153 12 154 11.5S156 6.5 158.5 6.5S161 11 163.5 11.5S166 9 167 8" fill="none" stroke="#ffff00" stroke-width="2.4"/>
<path d="M147 18C148 14.5 149.5 14.5 151 17S153 20.5 154 20.5S156 14.5 158.5 14.5S161 20 163.5 20.5S166 18 167 17" fill="none" stroke="#00ffff" stroke-width="2.4"/>

<rect x="170.5" y="3.5" width="22" height="20" fill="#000" stroke="#b4b0a8" stroke-width="1"/>
<path d="M174.5 20.2L188.8 5.6" stroke="#00e600" stroke-width="2.8" stroke-linecap="round"/>

<rect x="195.5" y="3.5" width="22" height="20" fill="#000" stroke="#b4b0a8" stroke-width="1"/>
<g filter="url(#blur1)">
<rect x="199" y="13" width="10" height="8.5" rx="1.5" fill="#8a8a8a"/>
<rect x="203" y="5.5" width="10.5" height="10" rx="2" fill="#8a8a8a"/>
<path d="M199.5 20.5H202.5V14H205V7H209V13.5H213.5M200.5 16V21M204 15V21M207 8V21M211 7V14" fill="none" stroke="#c8c8c8" stroke-width="1"/>
</g>

<path d="M223 2.5H263L265.5 5V21L263 23.5H223L220.5 21V5Z" fill="none" stroke="#0000a8" stroke-width="1"/>
<path d="M263 2.5L265.5 5V21L263 23.5H223" fill="none" stroke="#5a5a5a" stroke-width="1"/>

<g fill="none" stroke="#ccffff" stroke-width="2.2">
<path d="M271 21H276.1V6.1H285.1V21H292"/>
<path d="M278.6 3V9.5M281.6 3V9.5M284.2 3V9.5M273.2 16.5V23.8M287.8 18V23.8M290.4 18V23.8" stroke-width="1.5"/>
</g>

<text x="299.6" y="21.2" font-size="21.5" font-weight="bold" fill="#ff0000" textLength="13" lengthAdjust="spacingAndGlyphs">S</text>

<g fill="#40483e">
<rect x="320" y="13" width="18" height="3.5"/>
<rect x="324.5" y="16" width="2.2" height="3.5"/>
<rect x="328.5" y="16" width="2.2" height="3.5"/>
<rect x="332.5" y="16" width="2.2" height="3"/>
<path d="M336.5 10.5Q336.5 9 338.5 9H340Q342.8 9 342.8 15Q342.8 21 340 21H338.5Q336.5 21 336.5 19.5Z"/>
</g>
<rect x="339" y="12" width="1.6" height="6" rx="0.8" fill="#363098"/>

<g fill="none" stroke="#c8ffff" stroke-width="1.05">
<path d="M346.6 3.6H365.4V22.4H349.6L346.6 19.4Z"/>
<path d="M349.6 3.6V12.4H361.4V3.6"/>
</g>
<rect x="350.5" y="15" width="11" height="7" fill="#c8ffff"/>
<rect x="352.5" y="16" width="2" height="5" fill="#363098"/>

<g fill="none" stroke="#484840" stroke-width="1.6">
<path d="M375.5 3.8H388V13.5M375.5 13.5V3.8"/>
<path d="M372 14H391V23H372Z"/>
</g>
<rect x="378" y="6" width="8" height="1" fill="#484840"/>
<rect x="378" y="8.5" width="8" height="1" fill="#484840"/>
<rect x="378" y="11" width="8" height="1" fill="#484840"/>
<rect x="374" y="17.5" width="15" height="2.5" fill="#484840"/>

<rect x="396" y="1" width="1" height="26" fill="#000"/>
<rect x="397" y="1" width="1" height="26" fill="#4a6cf2"/>

<rect x="404" y="3" width="1" height="21.5" fill="#6a6a6a"/>
<rect x="515" y="3" width="1" height="21.5" fill="#6a6a6a"/>
<rect x="406.8" y="4.6" width="106.4" height="18.4" fill="#000" stroke="#ff6010" stroke-width="2.2"/>
<path id="tbw" d="M408.0 13.39L408.5 16.09L409.0 18.43L409.5 20.05L410.0 20.69L410.5 20.26L411.0 18.82L411.5 16.60L412.0 13.94L412.5 11.25L413.0 8.97L413.5 7.44L414.0 6.90L414.5 7.44L415.0 8.97L415.5 11.25L416.0 13.94L416.5 16.60L417.0 18.82L417.5 20.26L418.0 20.69L418.5 20.05L419.0 18.43L419.5 16.09L420.0 13.39L420.5 10.75L421.0 8.59L421.5 7.25L422.0 6.92L422.5 7.67L423.0 9.38L423.5 11.77L424.0 14.48L424.5 17.09L425.0 19.18L425.5 20.43L426.0 20.65L426.5 19.80L427.0 18.01L427.5 15.56L428.0 12.84L428.5 10.27L429.0 8.25L429.5 7.10L430.0 6.99L430.5 7.94L431.0 9.81L431.5 12.30L432.0 15.03L432.5 17.56L433.0 19.51L433.5 20.56L434.0 20.56L434.5 19.51L435.0 17.56L435.5 15.03L436.0 12.30L436.5 9.81L437.0 7.94L437.5 6.99L438.0 7.10L438.5 8.25L439.0 10.27L439.5 12.84L440.0 15.56L440.5 18.01L441.0 19.80L441.5 20.65L442.0 20.43L442.5 19.18L443.0 17.09L443.5 14.48L444.0 11.77L444.5 9.38L445.0 7.67L445.5 6.92L446.0 7.25L446.5 8.59L447.0 10.75L447.5 13.39L448.0 16.09L448.5 18.43L449.0 20.05L449.5 20.69L450.0 20.26L450.5 18.82L451.0 16.60L451.5 13.94L452.0 11.25L452.5 8.97L453.0 7.44L453.5 6.90L454.0 7.44L454.5 8.97L455.0 11.25L455.5 13.94L456.0 16.60L456.5 18.82L457.0 20.26L457.5 20.69L458.0 20.05L458.5 18.43L459.0 16.09L459.5 13.39L460.0 10.75L460.5 8.59L461.0 7.25L461.5 6.92L462.0 7.67L462.5 9.38L463.0 11.77L463.5 14.48L464.0 17.09L464.5 19.18L465.0 20.43L465.5 20.65L466.0 19.80L466.5 18.01L467.0 15.56L467.5 12.84L468.0 10.27L468.5 8.25L469.0 7.10L469.5 6.99L470.0 7.94L470.5 9.81L471.0 12.30L471.5 15.03L472.0 17.56L472.5 19.51L473.0 20.56L473.5 20.56L474.0 19.51L474.5 17.56L475.0 15.03L475.5 12.30L476.0 9.81L476.5 7.94L477.0 6.99L477.5 7.10L478.0 8.25L478.5 10.27L479.0 12.84L479.5 15.56L480.0 18.01L480.5 19.80L481.0 20.65L481.5 20.43L482.0 19.18L482.5 17.09L483.0 14.48L483.5 11.77L484.0 9.38L484.5 7.67L485.0 6.92L485.5 7.25L486.0 8.59L486.5 10.75L487.0 13.39L487.5 16.09L488.0 18.43L488.5 20.05L489.0 20.69L489.5 20.26L490.0 18.82L490.5 16.60L491.0 13.94L491.5 11.25L492.0 8.97L492.5 7.44L493.0 6.90L493.5 7.44L494.0 8.97L494.5 11.25L495.0 13.94L495.5 16.60L496.0 18.82L496.5 20.26L497.0 20.69L497.5 20.05L498.0 18.43L498.5 16.09L499.0 13.39L499.5 10.75L500.0 8.59L500.5 7.25L501.0 6.92L501.5 7.67L502.0 9.38L502.5 11.77L503.0 14.48L503.5 17.09L504.0 19.18L504.5 20.43L505.0 20.65L505.5 19.80L506.0 18.01L506.5 15.56L507.0 12.84L507.5 10.27L508.0 8.25L508.5 7.10L509.0 6.99L509.5 7.94L510.0 9.81L510.5 12.30L511.0 15.03L511.5 17.56L512.0 19.51" fill="none" stroke="#00ffff" stroke-width="2"/>

<rect x="521.5" y="3.5" width="21" height="21" fill="#000" stroke="#c0b8a8" stroke-width="1"/>
<text x="522.6" y="20.8" font-size="19" fill="#e0ffff" stroke="#e0ffff" stroke-width="0.5" textLength="17.6" lengthAdjust="spacingAndGlyphs">W</text>

<rect x="547.5" y="3" width="99" height="21.5" rx="8.5" fill="#000" stroke="#0000b4" stroke-width="1"/>
<path d="M646.5 11.5V16A8.5 8.5 0 0 1 638 24.5H556" fill="none" stroke="#505050" stroke-width="1"/>
<text x="572" y="20.7" font-size="18.3" fill="#fff" stroke="#000" stroke-width="0.25" textLength="50" lengthAdjust="spacingAndGlyphs">400us</text>

<text x="708" y="21" font-size="18" fill="#c0ffff" stroke="#363098" stroke-width="0.25" textLength="40" lengthAdjust="spacingAndGlyphs">Menu</text>

<!-- ===== bottom bar ===== -->
<g id="ch1icons">
<rect x="16" y="456.5" width="18" height="2.5" rx="1" fill="#ffff00"/>
<path d="M16 461h3.5v1H16zM21 461h3v1h-3zM25 461h3v1h-3zM29 461h3v1h-3z" fill="#ffff00"/>
<text x="16" y="472.9" font-size="12.8" fill="#ffff00" stroke="#ffff00" stroke-width="0.15" textLength="16.8" lengthAdjust="spacingAndGlyphs">DC</text>
</g>
<circle cx="49" cy="464.8" r="8.9" fill="none" stroke="#474a40" stroke-width="2.1"/>
<text x="42.3" y="470.3" font-size="15.5" font-weight="bold" fill="#474a40" textLength="12.8" lengthAdjust="spacingAndGlyphs">20</text>
<path d="M64 462H66.7V458H71.6V462H77V458H80.4V462H82" fill="none" stroke="#ffff00" stroke-width="2"/>
<path d="M64 467H67V471H71.6V467H77V471H80.6V467H82" fill="none" stroke="#888888" stroke-width="1.8"/>
<rect x="87" y="453" width="82" height="22" rx="11" fill="#000"/>
<text x="105" y="472" font-size="18" fill="#ffff00" stroke="#000" stroke-width="0.25" textLength="45.5" lengthAdjust="spacingAndGlyphs">10.0V</text>

<rect x="171" y="452" width="1" height="26" fill="#000"/>
<rect x="172" y="452" width="1" height="26" fill="#4a6cf2"/>

<path d="M175 457.8L177.5 456.5H194V459H177.5Z" fill="#00ffff"/>
<path d="M177 461h3v1h-3zM181 461h3v1h-3zM185 461h3v1h-3zM189 461h3v1h-3z" fill="#00ffff"/>
<text x="176" y="473.2" font-size="12.8" fill="#00ffff" textLength="16.5" lengthAdjust="spacingAndGlyphs">DC</text>
<circle cx="209" cy="464.8" r="8.9" fill="none" stroke="#474a40" stroke-width="2.1"/>
<text x="202.3" y="470.3" font-size="15.5" font-weight="bold" fill="#474a40" textLength="12.8" lengthAdjust="spacingAndGlyphs">20</text>
<path d="M225 462H227.7V458H232.6V462H238V458H241.4V462H243.5" fill="none" stroke="#00ffff" stroke-width="2"/>
<path d="M225 467H228V471H232.6V467H238V471H241.6V467H243.5" fill="none" stroke="#888888" stroke-width="1.8"/>
<rect x="247" y="453" width="82" height="22" rx="11" fill="#000"/>
<text x="265" y="472" font-size="18" fill="#00ffff" stroke="#000" stroke-width="0.25" textLength="46.5" lengthAdjust="spacingAndGlyphs">10.0V</text>

<rect x="331" y="452" width="1" height="26" fill="#000"/>
<rect x="332" y="452" width="1" height="26" fill="#4a6cf2"/>

<text x="353.5" y="471" font-size="18" fill="#ffff00" stroke="#363098" stroke-width="0.25" textLength="26" lengthAdjust="spacingAndGlyphs">CH1</text>
<path d="M385.5 456H391.5L397.5 472H402.5" fill="none" stroke="#a8e0ff" stroke-width="2"/>
<rect x="405" y="453" width="78" height="22" rx="11" fill="#000"/>
<text x="415" y="471.2" font-size="18" fill="#ffff00" stroke="#000" stroke-width="0.25" textLength="57" lengthAdjust="spacingAndGlyphs">&#8722;5.60V</text>

<rect x="501" y="452" width="1" height="26" fill="#000"/>
<rect x="502" y="452" width="1" height="26" fill="#4a6cf2"/>

<rect x="513" y="453" width="130" height="22" rx="11" fill="#000"/>
<text x="535.5" y="471.2" font-size="18" fill="#ffff00" stroke="#000" stroke-width="0.25" textLength="85" lengthAdjust="spacingAndGlyphs">0.00000Hz</text>

<text x="670" y="471" font-size="15.8" fill="#ffffff" stroke="#363098" stroke-width="0.2" textLength="109.5" lengthAdjust="spacingAndGlyphs">1-Jan-09 00:15</text>
</svg>
</body></html>
